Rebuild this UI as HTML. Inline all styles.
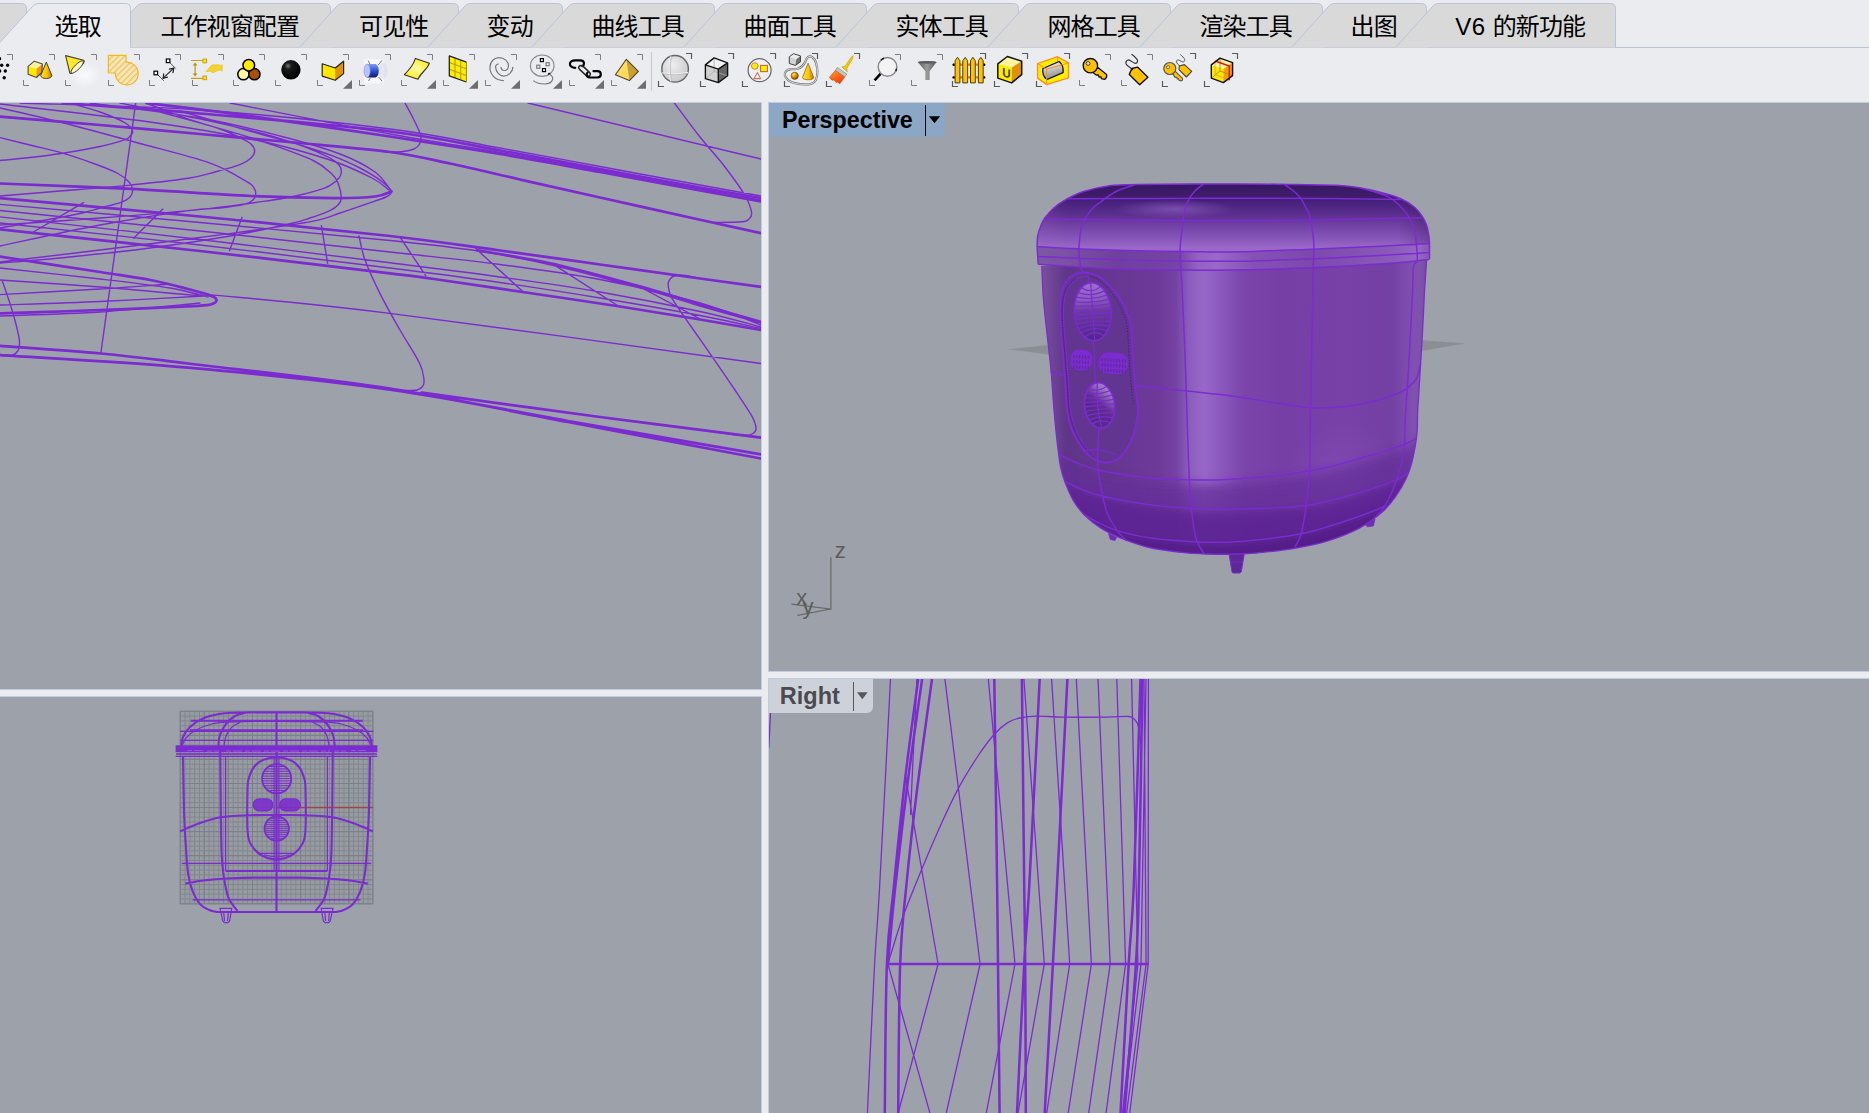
<!DOCTYPE html>
<html lang="zh-CN"><head><meta charset="utf-8"><title>Rhino</title>
<style>
html,body{margin:0;padding:0;}
body{width:1869px;height:1113px;overflow:hidden;background:#ebecf0;position:relative;font-family:"Liberation Sans","Noto Sans CJK SC",sans-serif;}
.abs{position:absolute;}
.vp{position:absolute;background:#9da2aa;overflow:hidden;box-shadow:0 0 0 1px #c3cbe0;}
.tabtxt{position:absolute;top:9.8px;height:34px;line-height:34px;font-size:24px;letter-spacing:-0.9px;text-indent:-1.6px;color:#000;text-align:center;white-space:nowrap;}
.vtitle{position:absolute;font-family:"Liberation Sans",sans-serif;font-weight:bold;color:#000;white-space:nowrap;}
svg{position:absolute;left:0;top:0;overflow:visible;}
</style></head><body>

<svg width="1869" height="50" viewBox="0 0 1869 50">
<path d="M0 47.5H1869" stroke="#b9c3da" stroke-width="1" fill="none"/>
<path d="M-131.0 47.5 L-94.5 7.0 Q-92.0 3.5 -88.5 3.5 L21.5 3.5 Q26.5 3.5 26.5 8.5 L26.5 47.5 Z" fill="#d9d9d9" stroke="none"/>
<path d="M-131.0 47.5 L-94.5 7.0 Q-92.0 3.5 -88.5 3.5 L21.5 3.5 Q26.5 3.5 26.5 8.5 L26.5 47.5" fill="none" stroke="#b9c3da" stroke-width="1"/>
<path d="M99.5 47.5 L136.0 7.0 Q138.5 3.5 142.0 3.5 L325.5 3.5 Q330.5 3.5 330.5 8.5 L330.5 47.5 Z" fill="#d9d9d9" stroke="none"/>
<path d="M99.5 47.5 L136.0 7.0 Q138.5 3.5 142.0 3.5 L325.5 3.5 Q330.5 3.5 330.5 8.5 L330.5 47.5" fill="none" stroke="#b9c3da" stroke-width="1"/>
<path d="M299.5 47.5 L336.0 7.0 Q338.5 3.5 342.0 3.5 L453.5 3.5 Q458.5 3.5 458.5 8.5 L458.5 47.5 Z" fill="#d9d9d9" stroke="none"/>
<path d="M299.5 47.5 L336.0 7.0 Q338.5 3.5 342.0 3.5 L453.5 3.5 Q458.5 3.5 458.5 8.5 L458.5 47.5" fill="none" stroke="#b9c3da" stroke-width="1"/>
<path d="M427.5 47.5 L464.0 7.0 Q466.5 3.5 470.0 3.5 L557.5 3.5 Q562.5 3.5 562.5 8.5 L562.5 47.5 Z" fill="#d9d9d9" stroke="none"/>
<path d="M427.5 47.5 L464.0 7.0 Q466.5 3.5 470.0 3.5 L557.5 3.5 Q562.5 3.5 562.5 8.5 L562.5 47.5" fill="none" stroke="#b9c3da" stroke-width="1"/>
<path d="M531.5 47.5 L568.0 7.0 Q570.5 3.5 574.0 3.5 L709.5 3.5 Q714.5 3.5 714.5 8.5 L714.5 47.5 Z" fill="#d9d9d9" stroke="none"/>
<path d="M531.5 47.5 L568.0 7.0 Q570.5 3.5 574.0 3.5 L709.5 3.5 Q714.5 3.5 714.5 8.5 L714.5 47.5" fill="none" stroke="#b9c3da" stroke-width="1"/>
<path d="M683.5 47.5 L720.0 7.0 Q722.5 3.5 726.0 3.5 L861.5 3.5 Q866.5 3.5 866.5 8.5 L866.5 47.5 Z" fill="#d9d9d9" stroke="none"/>
<path d="M683.5 47.5 L720.0 7.0 Q722.5 3.5 726.0 3.5 L861.5 3.5 Q866.5 3.5 866.5 8.5 L866.5 47.5" fill="none" stroke="#b9c3da" stroke-width="1"/>
<path d="M835.5 47.5 L872.0 7.0 Q874.5 3.5 878.0 3.5 L1013.5 3.5 Q1018.5 3.5 1018.5 8.5 L1018.5 47.5 Z" fill="#d9d9d9" stroke="none"/>
<path d="M835.5 47.5 L872.0 7.0 Q874.5 3.5 878.0 3.5 L1013.5 3.5 Q1018.5 3.5 1018.5 8.5 L1018.5 47.5" fill="none" stroke="#b9c3da" stroke-width="1"/>
<path d="M987.5 47.5 L1024.0 7.0 Q1026.5 3.5 1030.0 3.5 L1165.5 3.5 Q1170.5 3.5 1170.5 8.5 L1170.5 47.5 Z" fill="#d9d9d9" stroke="none"/>
<path d="M987.5 47.5 L1024.0 7.0 Q1026.5 3.5 1030.0 3.5 L1165.5 3.5 Q1170.5 3.5 1170.5 8.5 L1170.5 47.5" fill="none" stroke="#b9c3da" stroke-width="1"/>
<path d="M1139.5 47.5 L1176.0 7.0 Q1178.5 3.5 1182.0 3.5 L1317.5 3.5 Q1322.5 3.5 1322.5 8.5 L1322.5 47.5 Z" fill="#d9d9d9" stroke="none"/>
<path d="M1139.5 47.5 L1176.0 7.0 Q1178.5 3.5 1182.0 3.5 L1317.5 3.5 Q1322.5 3.5 1322.5 8.5 L1322.5 47.5" fill="none" stroke="#b9c3da" stroke-width="1"/>
<path d="M1291.5 47.5 L1328.0 7.0 Q1330.5 3.5 1334.0 3.5 L1421.5 3.5 Q1426.5 3.5 1426.5 8.5 L1426.5 47.5 Z" fill="#d9d9d9" stroke="none"/>
<path d="M1291.5 47.5 L1328.0 7.0 Q1330.5 3.5 1334.0 3.5 L1421.5 3.5 Q1426.5 3.5 1426.5 8.5 L1426.5 47.5" fill="none" stroke="#b9c3da" stroke-width="1"/>
<path d="M1395.5 47.5 L1432.0 7.0 Q1434.5 3.5 1438.0 3.5 L1610.5 3.5 Q1615.5 3.5 1615.5 8.5 L1615.5 47.5 Z" fill="#d9d9d9" stroke="none"/>
<path d="M1395.5 47.5 L1432.0 7.0 Q1434.5 3.5 1438.0 3.5 L1610.5 3.5 Q1615.5 3.5 1615.5 8.5 L1615.5 47.5" fill="none" stroke="#b9c3da" stroke-width="1"/>
<path d="M-4.5 47.5 L32.0 7.0 Q34.5 3.5 38.0 3.5 L125.5 3.5 Q130.5 3.5 130.5 8.5 L130.5 47.5 L130.5 49 L-5.5 49 Z" fill="#ebecf0" stroke="none"/>
<path d="M-4.5 47.5 L32.0 7.0 Q34.5 3.5 38.0 3.5 L125.5 3.5 Q130.5 3.5 130.5 8.5 L130.5 47.5" fill="none" stroke="#b9c3da" stroke-width="1"/>
</svg>
<div class="tabtxt" style="left:26.5px;width:104.0px">选取</div>
<div class="tabtxt" style="left:130.5px;width:200.0px">工作视窗配置</div>
<div class="tabtxt" style="left:330.5px;width:128.0px">可见性</div>
<div class="tabtxt" style="left:458.5px;width:104.0px">变动</div>
<div class="tabtxt" style="left:562.5px;width:152.0px">曲线工具</div>
<div class="tabtxt" style="left:714.5px;width:152.0px">曲面工具</div>
<div class="tabtxt" style="left:866.5px;width:152.0px">实体工具</div>
<div class="tabtxt" style="left:1018.5px;width:152.0px">网格工具</div>
<div class="tabtxt" style="left:1170.5px;width:152.0px">渲染工具</div>
<div class="tabtxt" style="left:1322.5px;width:104.0px">出图</div>
<div class="tabtxt" style="left:1426.5px;width:189.0px"><span style="letter-spacing:0.5px">V6 </span>的新功能</div>
<svg width="1869" height="56" viewBox="0 48 1869 56" style="left:0;top:48px">
<defs>
<linearGradient id="iy" x1="0" y1="0" x2="1" y2="1"><stop offset="0" stop-color="#fff27a"/><stop offset="1" stop-color="#f6c800"/></linearGradient>
<linearGradient id="icone" x1="0" y1="0" x2="1" y2="0"><stop offset="0" stop-color="#ffe23c"/><stop offset="0.55" stop-color="#ffc400"/><stop offset="1" stop-color="#b87400"/></linearGradient>
<radialGradient id="iblk" cx="0.35" cy="0.3" r="0.7"><stop offset="0" stop-color="#7a7a7a"/><stop offset="0.25" stop-color="#1a1a1a"/><stop offset="1" stop-color="#000"/></radialGradient>
<linearGradient id="iblue" x1="0" y1="0" x2="0" y2="1"><stop offset="0" stop-color="#7c98ff"/><stop offset="0.5" stop-color="#3450cc"/><stop offset="1" stop-color="#0c1478"/></linearGradient>
<radialGradient id="isurf" cx="0.5" cy="0.5" r="0.6"><stop offset="0" stop-color="#fffbb0"/><stop offset="1" stop-color="#ffe800"/></radialGradient>
<radialGradient id="isph" cx="0.4" cy="0.35" r="0.75"><stop offset="0" stop-color="#eeeeef"/><stop offset="1" stop-color="#c6c6ca"/></radialGradient>
<linearGradient id="ibr" x1="0" y1="0" x2="0.4" y2="1"><stop offset="0" stop-color="#ffa020"/><stop offset="1" stop-color="#ff3a10"/></linearGradient>
<linearGradient id="ifun" x1="0" y1="0" x2="1" y2="0"><stop offset="0" stop-color="#5a5a5a"/><stop offset="0.5" stop-color="#9a9a9a"/><stop offset="1" stop-color="#555"/></linearGradient>
<linearGradient id="icyl" x1="0" y1="0" x2="0.3" y2="1"><stop offset="0" stop-color="#ffffff"/><stop offset="1" stop-color="#8e8e8e"/></linearGradient>
<radialGradient id="iorb" cx="0.35" cy="0.3" r="0.8"><stop offset="0" stop-color="#ffe873"/><stop offset="0.45" stop-color="#e09000"/><stop offset="1" stop-color="#7a3c00"/></radialGradient>
<pattern id="ihat" width="4.2" height="4.2" patternUnits="userSpaceOnUse" patternTransform="rotate(-45)"><rect width="4.2" height="4.2" fill="#f5e6c2"/><rect width="4.2" height="1.25" fill="#f3c446"/></pattern>
<radialGradient id="iglow" cx="0.5" cy="0.5" r="0.5"><stop offset="0" stop-color="#fff" stop-opacity="0.75"/><stop offset="1" stop-color="#fff" stop-opacity="0"/></radialGradient>
</defs>
<g fill="#000"><circle cx="-0.5" cy="58.7" r="1.7"/><circle cx="1.7" cy="65.2" r="1.7"/><circle cx="7.6" cy="65.2" r="1.7"/><circle cx="-0.4" cy="71.0" r="1.7"/><circle cx="5.3" cy="71.0" r="1.7"/><circle cx="4.2" cy="77.8" r="1.7"/></g>
<path d="M7 54.5H12.5V60" stroke="#7e7e7e" fill="none"/>
<path d="M49 54.5H54.5V60 M23.5 80V85.5H29" stroke="#7e7e7e" stroke-width="1" fill="none"/><g transform="translate(23 54)"><path d="M5.1 12.3L11.3 7.2L19.4 10L13.5 14.8Z" fill="#fff5a0"/><path d="M5.1 12.3L13.5 14.8V23.5L5.1 20.2Z" fill="#ffe800"/><path d="M13.5 14.8L19.4 10L18.8 18.5L13.5 23.5Z" fill="#f09a10"/><path d="M5.1 12.3L11.3 7.2L19.4 10L18.8 18.5L13.5 23.5L5.1 20.2Z" fill="none" stroke="#4a4a40" stroke-width="1.1" stroke-linejoin="round"/><path d="M23.3 8.1L28.9 21.6A5.6 2.9 0 0 1 17.7 21.6Z" fill="url(#icone)" stroke="#4a4030" stroke-width="1" stroke-linejoin="round"/></g>
<path d="M91 54.5H96.5V60 M65.5 80V85.5H71" stroke="#7e7e7e" stroke-width="1" fill="none"/><ellipse cx="85" cy="75" rx="16" ry="13" fill="url(#iglow)"/><g transform="translate(65 54)"><path d="M0.6 1.6L18.6 6.2Q20 7 18.2 9.6L7 19.2Q4.6 20.2 4.6 18Z" fill="#ffe92a" stroke="#46462e" stroke-width="1.1" stroke-linejoin="round"/><ellipse cx="12.2" cy="13" rx="8.4" ry="2.6" transform="rotate(-45 12.2 13)" fill="#fff3cc" stroke="#3c3c2c" stroke-width="0.9"/></g>
<path d="M134 54.5H139.5V60 M108.5 80V85.5H114" stroke="#7e7e7e" stroke-width="1" fill="none"/><g transform="translate(108 54)"><path d="M0.4 1.4H18V8.2A11.4 11.4 0 1 1 7.4 19H0.4Z" fill="url(#ihat)" stroke="#f2b824" stroke-width="1.2"/></g>
<path d="M175 54.5H180.5V60 M149.5 80V85.5H155" stroke="#7e7e7e" stroke-width="1" fill="none"/><g transform="translate(149 54)"><path d="M20.8 8.6L26.8 14.6M8.6 20.6L14.8 26.8" stroke="#555" stroke-width="1"/><path d="M14.2 24.1L24.6 14.3" stroke="#333" stroke-width="1.2"/><path d="M24.9 14L20.4 15.2M24.9 14L24 18.6M14 24.4L18.4 23.2M14 24.4L14.8 19.9" stroke="#222" stroke-width="1.2" stroke-linecap="round"/><rect x="17.3" y="5" width="3.6" height="3.6" fill="#fff" stroke="#000" stroke-width="1.2"/><rect x="5" y="17.2" width="3.6" height="3.6" fill="#fff" stroke="#000" stroke-width="1.2"/></g>
<path d="M218 54.5H223.5V60 M192.5 80V85.5H198" stroke="#7e7e7e" stroke-width="1" fill="none"/><g transform="translate(192 54)"><path d="M-1 6.5H11M-1 24.4H11" stroke="#c6a21c" stroke-width="1.1"/><path d="M3.1 9.5V21.5" stroke="#b8961a" stroke-width="1.2"/><path d="M3.1 8.4L5.6 11.4H0.6ZM3.1 22.6L5.6 19.6H0.6Z" fill="#b8961a"/><rect x="10.9" y="5.1" width="3.7" height="3.7" fill="#ffe600" stroke="#c8a21c" stroke-width="1"/><rect x="10.9" y="22" width="3.7" height="3.7" fill="#ffe600" stroke="#c8a21c" stroke-width="1"/><path d="M14.1 17.6L20 10.9H26.7L28.7 11.7L30.1 10.7V17.1L28.1 15.7L23.3 17.6L21.1 18.8L18.3 17.1Z" fill="#f6d22c" stroke="#e8c020" stroke-width="0.8" stroke-linejoin="round"/></g>
<path d="M259 54.5H264.5V60 M233.5 80V85.5H239" stroke="#7e7e7e" stroke-width="1" fill="none"/><g transform="translate(233 54)"><circle cx="10.4" cy="20.2" r="5.6" fill="#fff6a0" stroke="#000" stroke-width="1.5"/><circle cx="21.4" cy="20.2" r="5.6" fill="#a65200" stroke="#000" stroke-width="1.5"/><circle cx="15.8" cy="11.2" r="5.8" fill="#ffec00" stroke="#000" stroke-width="1.5"/></g>
<path d="M301 54.5H306.5V60 M275.5 80V85.5H281" stroke="#7e7e7e" stroke-width="1" fill="none"/><g transform="translate(275 54)"><circle cx="15.9" cy="15.8" r="9.7" fill="url(#iblk)"/></g>
<path d="M343 54.5H348.5V60 M317.5 80V85.5H323" stroke="#7e7e7e" stroke-width="1" fill="none"/><path d="M352.0 80.0V88.8H343.0Z" fill="#6e6e6e"/><g transform="translate(317 54)"><path d="M5.2 9.8L18.2 14V26.3L5.2 22.1Z" fill="#ffe800"/><path d="M18.2 14L26.6 7.2V19.6L18.2 26.3Z" fill="#e39500"/><path d="M5.2 9.8L18.2 14L26.6 7.2V19.6L18.2 26.3L5.2 22.1Z" fill="none" stroke="#222" stroke-width="1.2" stroke-linejoin="round"/></g>
<path d="M385 54.5H390.5V60 M359.5 80V85.5H365" stroke="#7e7e7e" stroke-width="1" fill="none"/><g transform="translate(359 54)"><rect x="5" y="5.3" width="19.8" height="24.4" fill="#fff" fill-opacity="0.55"/><ellipse cx="24" cy="16.5" rx="4.5" ry="8" fill="#d8dcf0" fill-opacity="0.6"/><path d="M9.2 6.7L11 10.2M23 6.4L19 11.2M19.6 23L23 27M9.6 27L11.2 24" stroke="#666" stroke-width="0.9"/><path d="M8.1 10.1H16.5Q19.8 11.5 19.8 16.8Q19.8 22 16.5 23.5H8.1Z" fill="url(#iblue)"/><ellipse cx="8.1" cy="16.8" rx="3.1" ry="6.7" fill="#b6c2ff" stroke="#8890c0" stroke-width="0.6"/></g>
<path d="M427 54.5H432.5V60 M401.5 80V85.5H407" stroke="#7e7e7e" stroke-width="1" fill="none"/><path d="M436.0 80.0V88.8H427.0Z" fill="#6e6e6e"/><g transform="translate(401 54)"><path d="M14.4 4.4L28.4 9.2Q27 13 23 17T16.9 25.2L3.4 20.7Q7 17 10 13T14.4 4.4Z" fill="url(#isurf)" stroke="#333" stroke-width="1.1" stroke-linejoin="round"/></g>
<path d="M469 54.5H474.5V60 M443.5 80V85.5H449" stroke="#7e7e7e" stroke-width="1" fill="none"/><path d="M478.0 80.0V88.8H469.0Z" fill="#6e6e6e"/><g transform="translate(443 54)"><path d="M6.3 1.9L23.4 8.1V28L6.3 21.8Z" fill="#ffee00"/><path d="M12 4V23.9M17.7 6V25.9M6.3 8.5L23.4 14.7M6.3 15.2L23.4 21.4" stroke="#b4a200" stroke-width="1.1"/><path d="M23.4 8.1L6.3 1.9V21.8L23.4 28" fill="none" stroke="#222" stroke-width="1.3" stroke-linejoin="round"/><path d="M23.4 8.1V28" stroke="#9a8c00" stroke-width="1"/></g>
<path d="M511 54.5H516.5V60 M485.5 80V85.5H491" stroke="#7e7e7e" stroke-width="1" fill="none"/><path d="M520.0 80.0V88.8H511.0Z" fill="#6e6e6e"/><g transform="translate(485 54)"><path d="M18.8 26.6C10 26.5 4.6 20 5 12.9C5.4 7 9.5 3.6 14 3.6C19.5 3.6 23.6 7.6 23.5 11.7C23.4 15 21.5 16.6 19.6 16.5C17.5 16.4 16 14.8 16 12.9" fill="none" stroke="#777" stroke-width="1.2"/><path d="M13.6 10C11.5 10 10.4 11.6 10.6 13.4C11 18 14.5 22.1 18.5 22.1C23.5 22 27.6 18 28 12.9" fill="none" stroke="#777" stroke-width="1.2"/></g>
<path d="M553 54.5H558.5V60" stroke="#7e7e7e" fill="none" opacity="0"/><path d="M562.0 80.0V88.8H553.0Z" fill="#6e6e6e"/><g transform="translate(527 54)"><ellipse cx="15.2" cy="11.7" rx="11.8" ry="10.7" fill="none" stroke="#8a8a8a" stroke-width="1.2"/><rect x="13.4" y="4.6" width="3" height="3" fill="#fff" stroke="#000" stroke-width="1.2"/><rect x="19.1" y="8.7" width="3" height="3" fill="#fff" stroke="#777" stroke-width="1.2"/><rect x="9.8" y="11.2" width="3" height="3" fill="#fff" stroke="#777" stroke-width="1.2"/><rect x="15.5" y="14.6" width="3" height="3" fill="#fff" stroke="#000" stroke-width="1.2"/><circle cx="22.2" cy="19.9" r="1.1" fill="#000"/><path d="M22.2 19.9C25 21.5 26.2 23.5 25.6 25.5C24.5 29 20.5 30 17.5 30C13 30 9 28.6 6.2 26.6" fill="none" stroke="#777" stroke-width="1.1"/></g>
<path d="M595 54.5H600.5V60" stroke="#7e7e7e" fill="none"/><path d="M569.5 80V85.5H575" stroke="#7e7e7e" fill="none"/><path d="M604.0 80.0V88.8H595.0Z" fill="#6e6e6e"/><g transform="translate(569 54)"><path d="M6.3 13.8C3 13.8 0.9 12 0.9 10C0.9 8 3 6.4 6 6.4H11C13.6 6.4 15 8 15 9.6C15 10.6 14.4 11.6 13.4 12.2" fill="none" stroke="#000" stroke-width="2.2" stroke-linecap="round"/><path d="M10 12.4C11.2 11 13 11.2 14.2 12.4L20.6 18.4C21.8 19.8 21.4 21.2 20.4 21.8C19.2 22.6 17.8 22.2 16.8 21.2L10.6 15.4C9.6 14.4 9.4 13.2 10 12.4Z" fill="none" stroke="#222" stroke-width="1.5"/><path d="M24.4 17.1H28.6C30.8 17.1 31.8 18.8 31.8 20.3C31.8 22 30.6 23.5 28.4 23.5H21C18.8 23.5 17.6 22 17.6 20.6C17.6 19.8 18 19 18.6 18.6" fill="none" stroke="#000" stroke-width="2.2" stroke-linecap="round"/></g>
<path d="M637 54.5H642.5V60 M611.5 80V85.5H617" stroke="#7e7e7e" stroke-width="1" fill="none"/><path d="M646.0 80.0V88.8H637.0Z" fill="#6e6e6e"/><g transform="translate(611 54)"><path d="M15.3 5.3L4.4 20.7L18.4 26.6Z" fill="#ffda5c"/><path d="M15.3 5.3L18.4 26.6L27.4 17.3Z" fill="#c8a030"/><path d="M15.3 5.3L4.4 20.7L18.4 26.6L27.4 17.3Z" fill="none" stroke="#4a4432" stroke-width="1.1" stroke-linejoin="round"/></g>
<path d="M651.5 52V90.5" stroke="#c9cacf" stroke-width="1.2"/>
<path d="M686 53.5H691.5V59 M658.5 81V86.5H664" stroke="#5a5a5a" stroke-width="1.2" fill="none"/><g transform="translate(658 53)"><circle cx="17.1" cy="15.8" r="13.3" fill="url(#isph)" stroke="#666" stroke-width="1.4"/><path d="M12.6 3.4Q9.6 15.8 12.8 28.4M4 19.8Q17 22.6 30.2 19.4" fill="none" stroke="#f2f2f4" stroke-width="1"/><path d="M13.6 3.2Q10.6 15.8 13.8 28.6M4 20.8Q17 23.6 30.2 20.4" fill="none" stroke="#b9b9be" stroke-width="0.8"/></g>
<path d="M728 53.5H733.5V59 M700.5 81V86.5H706" stroke="#5a5a5a" stroke-width="1.2" fill="none"/><g transform="translate(700 53)"><path d="M5.4 11.9L14.1 4.9L27.6 9.9L18.3 16.1Z" fill="#f2f2f2"/><path d="M5.4 11.9L18.3 16.1V29.6L5.4 25.7Z" fill="#cfcfcf" fill-opacity="0.92"/><path d="M18.3 16.1L27.6 9.9V22.8L18.3 29.6Z" fill="#666"/><path d="M14.1 4.9V18.3L5.4 25.7M14.1 18.3L27.6 22.8" fill="none" stroke="#aaa" stroke-width="0.8"/><path d="M5.4 11.9L14.1 4.9L27.6 9.9V22.8L18.3 29.6L5.4 25.7ZM5.4 11.9L18.3 16.1L27.6 9.9M18.3 16.1V29.6" fill="none" stroke="#111" stroke-width="1.4" stroke-linejoin="round"/></g>
<path d="M770 53.5H775.5V59 M742.5 81V86.5H748" stroke="#5a5a5a" stroke-width="1.2" fill="none"/><g transform="translate(742 53)"><circle cx="17.6" cy="17.2" r="11.5" fill="#f0f0f4" stroke="#666" stroke-width="1.2"/><circle cx="12.8" cy="13" r="3.3" fill="#ffee00" stroke="#d4883a" stroke-width="1"/><rect x="18.6" y="12.4" width="6.8" height="6.2" fill="#ffee00" stroke="#c0701e" stroke-width="1.1"/><path d="M15.4 19.7L11.9 25.6H18.6Z" fill="none" stroke="#c47a56" stroke-width="1.1"/></g>
<path d="M812 53.5H817.5V59 M784.5 81V86.5H790" stroke="#5a5a5a" stroke-width="1.2" fill="none"/><g transform="translate(784 53)"><path d="M1.6 18.9C3 16.6 5 16.2 7.2 16.1C10 16 12 16.4 14.5 15.5C17.5 14.4 19.5 12 20.7 9.9C22 7.6 22.5 4.8 24.1 4C25.3 3.3 26.8 3.3 28 4C30.5 5.5 31.4 7.6 32 9.9C32.8 12.8 33.4 15 33.4 18.3C33.4 21.5 33 24.5 32 26.8C30.5 30 27.5 31.3 24.1 31.3C20 31.4 16.5 31.4 12.9 30.7C9.5 30 6.5 29 4.4 27.3C2.5 25.8 1.2 24 0.8 22.3C0.5 21 0.9 20 1.6 18.9Z" fill="#f2f2f5" fill-opacity="0.6" stroke="#777" stroke-width="2.2"/><path d="M1.6 18.9C3 16.6 5 16.2 7.2 16.1C10 16 12 16.4 14.5 15.5C17.5 14.4 19.5 12 20.7 9.9C22 7.6 22.5 4.8 24.1 4C25.3 3.3 26.8 3.3 28 4C30.5 5.5 31.4 7.6 32 9.9C32.8 12.8 33.4 15 33.4 18.3C33.4 21.5 33 24.5 32 26.8C30.5 30 27.5 31.3 24.1 31.3C20 31.4 16.5 31.4 12.9 30.7C9.5 30 6.5 29 4.4 27.3C2.5 25.8 1.2 24 0.8 22.3C0.5 21 0.9 20 1.6 18.9Z" fill="none" stroke="#f4f4f4" stroke-width="0.8"/><path d="M5.3 3.7L9.5 0.7L16.5 2.9L12.3 6.3Z" fill="#ececec"/><path d="M5.3 3.7L12.3 6.3L11.4 12.4L5.3 10.5Z" fill="#d2d2d2"/><path d="M12.3 6.3L16.5 2.9V8.8L11.4 12.4Z" fill="#707070"/><path d="M5.3 3.7L9.5 0.7L16.5 2.9V8.8L11.4 12.4L5.3 10.5Z" fill="none" stroke="#444" stroke-width="1"/><circle cx="10.7" cy="22.8" r="3.6" fill="url(#iorb)" stroke="#6a3a00" stroke-width="0.6"/><path d="M24.1 10.2L29.7 24.5A5.6 2.3 0 0 1 18.5 24.5Z" fill="url(#icone)" stroke="#8a5a10" stroke-width="0.7" stroke-linejoin="round"/></g>
<path d="M854 53.5H859.5V59 M826.5 81V86.5H832" stroke="#5a5a5a" stroke-width="1.2" fill="none"/><g transform="translate(826 53)"><path d="M27.3 2.6L26.4 6L20.8 15.5L21.4 18.9L15.8 13.9L19 13.2L25.2 4.2Z" fill="#f2c800" stroke="#c8a000" stroke-width="0.6" stroke-linejoin="round"/><path d="M11.3 14.4L20.9 21.2L18.6 24L9.3 17.5Z" fill="#c4c4c4" stroke="#8a8a8a" stroke-width="0.7"/><path d="M9.3 17.5L18.6 24L13.6 31L11.8 29L10 29.4L8.2 27L6 27.2L3.4 24.5Z" fill="url(#ibr)" stroke="#c05018" stroke-width="0.6"/></g>
<path d="M895 54.5H900.5V60 M869.5 80V85.5H875" stroke="#7e7e7e" stroke-width="1" fill="none"/><g transform="translate(869 54)"><path d="M11.7 19.6L5.6 26.3" stroke="#000" stroke-width="2.6"/><circle cx="18.5" cy="12.9" r="9.3" fill="#f3f3f4" stroke="#8a8a8a" stroke-width="1.5"/><path d="M12 6.2A9.3 9.3 0 0 1 15 4.3M27.6 14.6A9.3 9.3 0 0 1 26.7 17.2" fill="none" stroke="#222" stroke-width="1.5"/></g>
<path d="M937 54.5H942.5V60 M911.5 80V85.5H917" stroke="#7e7e7e" stroke-width="1" fill="none"/><g transform="translate(911 54)"><path d="M6.8 8.1Q16.2 6.4 25.6 8.1L18.6 17.3V26.1H14.4V17.3Z" fill="url(#ifun)"/><ellipse cx="16.2" cy="8.3" rx="9.4" ry="1.4" fill="#5c5c5c"/></g>
<path d="M980 53.5H985.5V59 M952.5 81V86.5H958" stroke="#5a5a5a" stroke-width="1.2" fill="none"/><g transform="translate(952 53)"><path d="M1.4 11.7H32.3M1.4 24.4H32.3" stroke="#e08400" stroke-width="2.2"/><circle cx="1.6" cy="11.7" r="1.2"/><circle cx="32.2" cy="11.7" r="1.2"/><circle cx="1.6" cy="24.4" r="1.2"/><circle cx="32.2" cy="24.4" r="1.2"/><path d="M3.1 29.9V7.7L5.5 4.3L7.9 7.7V29.9Z" fill="#ffc200" stroke="#3a3000" stroke-width="0.9" stroke-linejoin="round"/><path d="M10.8 29.9V7.7L13.2 4.3L15.6 7.7V29.9Z" fill="#ffc200" stroke="#3a3000" stroke-width="0.9" stroke-linejoin="round"/><path d="M18.5 29.9V7.7L20.9 4.3L23.3 7.7V29.9Z" fill="#ffc200" stroke="#3a3000" stroke-width="0.9" stroke-linejoin="round"/><path d="M26.4 29.9V7.7L28.8 4.3L31.2 7.7V29.9Z" fill="#ffc200" stroke="#3a3000" stroke-width="0.9" stroke-linejoin="round"/></g>
<path d="M1022 53.5H1027.5V59 M994.5 81V86.5H1000" stroke="#5a5a5a" stroke-width="1.2" fill="none"/><g transform="translate(994 53)"><path d="M3.8 10.8L13.4 3.5L27.7 8.2L17.9 14.4Z" fill="#fff6a0"/><path d="M3.8 10.8L17.9 14.4L17.6 29.9L3.8 25.1Z" fill="#ffec00"/><path d="M17.9 14.4L27.7 8.2V21.7L17.6 29.9Z" fill="#e19200"/><path d="M3.8 10.8L13.4 3.5L27.7 8.2V21.7L17.6 29.9L3.8 25.1Z" fill="none" stroke="#111" stroke-width="1.5" stroke-linejoin="round"/><text x="8.3" y="21" font-family="Liberation Sans,sans-serif" font-weight="bold" font-size="12.5" fill="#4c4400" transform="skewY(15)" textLength="8.4" lengthAdjust="spacingAndGlyphs">U</text></g>
<path d="M1064 53.5H1069.5V59 M1036.5 81V86.5H1042" stroke="#5a5a5a" stroke-width="1.2" fill="none"/><g transform="translate(1036 53)"><path d="M1.6 10.5L21.5 3.7L32.5 9.9V24.8L10.9 31.6L1.6 25.1Z" fill="#ffee00" stroke="#ff8a26" stroke-width="1.3" stroke-linejoin="round"/><path d="M6.9 15.5L23.2 8.5Q27.8 12.5 27.1 19.5L10.9 26.5Q6 23 6.9 15.5Z" fill="url(#icyl)" stroke="#111" stroke-width="1.3"/><path d="M1.6 10.5L10.6 16.1V31.4M10.6 16.1L32.3 10M21.5 3.7V8" fill="none" stroke="#ff8a26" stroke-width="1"/></g>
<path d="M1105 54.5H1110.5V60 M1079.5 80V85.5H1085" stroke="#7e7e7e" stroke-width="1" fill="none"/><g transform="translate(1079 54)"><path d="M13.6 18.2L18.6 13.2L27.6 20.6Q28.4 23.6 25.6 25.4L22.4 24.6L22 22.8L20 23L19.4 21L17.2 21Z" fill="#ffc200" stroke="#111" stroke-width="1.3" stroke-linejoin="round"/><circle cx="11.4" cy="11.7" r="7.2" fill="#ffc200" stroke="#111" stroke-width="1.4"/><circle cx="9.1" cy="9.5" r="1.9" fill="#dcdce8" stroke="#333" stroke-width="0.9"/></g>
<path d="M1147 54.5H1152.5V60 M1121.5 80V85.5H1127" stroke="#7e7e7e" stroke-width="1" fill="none"/><g transform="translate(1121 54)"><path d="M10.6 0.2C13 2 16 4.4 16.5 6.4C17 8.4 15.4 9.6 13.7 9.2C11.4 8.6 9.4 5.6 7 6C5 6.4 4.6 8.4 5.2 10C6.2 12 8.4 13 10.3 14.5" fill="none" stroke="#333" stroke-width="1.2"/><path d="M10.9 14.5L16.5 13.1L26.9 23.2L18.7 30.8L8.3 20.4Z" fill="#ffc200" stroke="#111" stroke-width="1.4" stroke-linejoin="round"/><circle cx="11.2" cy="15.3" r="1" fill="#111"/></g>
<path d="M1190 53.5H1195.5V59 M1162.5 81V86.5H1168" stroke="#5a5a5a" stroke-width="1.2" fill="none"/><g transform="translate(1162 53)"><path d="M18.2 1.5C20 3 22.4 5 22.7 6.6C23 8.2 21.8 9.2 20.4 8.8C18.6 8.3 17.2 6.6 15.4 7.1C14.2 7.5 14.2 8.8 14.8 9.8C15.6 11 16.8 12 17.6 13" fill="none" stroke="#555" stroke-width="1"/><path d="M17.3 13L22.4 11.6L29.7 18.3L24.3 24L17 16.7Z" fill="#ffc200" stroke="#444" stroke-width="1.1" stroke-linejoin="round"/><path d="M10.6 20.6L13 18.2L20.6 25.4Q21 27.2 19.4 27.9L17 27.2L16.6 25.8L15.2 25.9L14.8 24.4L13.2 24.4Z" fill="#ffc200" stroke="#555" stroke-width="1.1" stroke-linejoin="round"/><circle cx="7.8" cy="15.5" r="6" fill="#ffc200" stroke="#555" stroke-width="1.2"/><circle cx="6.1" cy="14.2" r="1.6" fill="#dcdce8" stroke="#555" stroke-width="0.8"/></g>
<path d="M1232 53.5H1237.5V59 M1204.5 81V86.5H1210" stroke="#5a5a5a" stroke-width="1.2" fill="none"/><g transform="translate(1204 53)"><path d="M7.3 11.9L16 5.1L28.6 9.6L19.6 16Z" fill="#fff4a0"/><path d="M7.3 11.9L19.6 16L19.4 29.6L7.3 25.1Z" fill="#ffe800"/><path d="M19.6 16L28.6 9.6V22.6L19.4 29.6Z" fill="#f0a000"/><path d="M16 5.1V18L7.3 25.1M16 18L28.6 22.6" fill="none" stroke="#b08000" stroke-width="0.8"/><path d="M11.2 8L25.3 13V27.3" fill="none" stroke="#e01414" stroke-width="1.5"/><path d="M11.2 8V21.5L25.3 27" fill="none" stroke="#f07a50" stroke-width="0.8" opacity="0.7"/><path d="M7.3 11.9L16 5.1L28.6 9.6V22.6L19.4 29.6L7.3 25.1Z" fill="none" stroke="#111" stroke-width="1.4" stroke-linejoin="round"/></g>
</svg>
<div class="vp" id="vpTL" style="left:0;top:103px;width:761px;height:586px"><svg width="1869" height="1113" viewBox="0 0 1869 1113" style="left:0;top:-103px" fill="none" stroke="#7b2bcf" stroke-linecap="round">
<path stroke-width="1.4" d="M135.7 103.0L100.8 353.5M20.0 103.0C50.0 104.2 138.3 105.7 200.0 110.0C261.7 114.3 340.0 122.7 390.0 129.0C440.0 135.3 465.0 141.8 500.0 148.0C535.0 154.2 566.7 160.3 600.0 166.5C633.3 172.7 673.2 180.1 700.0 185.0C726.8 189.9 750.8 194.2 761.0 196.0M230.0 103.0C256.7 108.2 345.0 125.8 390.0 134.0C435.0 142.2 465.0 146.4 500.0 152.5C535.0 158.6 566.7 164.4 600.0 170.5C633.3 176.6 673.2 184.1 700.0 189.0C726.8 193.9 750.8 198.2 761.0 200.0M528.0 103.0L761.0 159.0M674.4 103.0C678.7 108.7 691.6 126.3 700.0 137.0C708.4 147.7 717.5 157.2 725.0 167.0C732.5 176.8 740.9 188.4 745.3 196.0C749.7 203.6 751.0 208.9 751.6 212.7C752.2 216.5 750.6 217.5 749.0 219.0C747.4 220.5 747.8 221.2 742.0 221.8C736.2 222.4 718.7 222.4 714.0 222.5M405.0 103.0C406.5 105.8 411.4 114.6 414.0 120.0C416.6 125.4 419.8 131.5 420.7 135.5C421.6 139.5 420.6 141.8 419.5 144.0C418.4 146.2 417.1 147.7 414.0 149.0C410.9 150.3 405.7 151.4 400.9 151.8C396.1 152.2 387.6 151.6 385.0 151.5M68.9 103.0C74.1 104.5 90.6 108.7 100.0 112.0C109.4 115.3 119.9 119.8 125.3 123.0C130.7 126.2 131.8 129.1 132.6 131.3C133.4 133.5 131.2 134.6 130.0 136.0C128.8 137.4 130.3 137.9 125.3 139.7C120.3 141.4 110.5 144.2 100.0 146.5C89.5 148.8 74.3 151.4 62.6 153.2C50.9 155.0 40.4 156.3 30.0 157.5C19.6 158.7 5.0 160.0 0.0 160.5M0.0 137.6C5.0 138.8 19.6 142.4 30.0 145.0C40.4 147.6 51.8 150.0 62.6 153.2C73.4 156.4 85.9 160.7 95.0 164.0C104.1 167.3 111.3 170.0 117.0 173.0C122.7 176.0 126.4 179.2 129.0 182.0C131.6 184.8 132.4 187.3 132.6 189.8C132.8 192.3 131.9 194.9 130.0 197.0C128.1 199.1 126.0 200.5 121.0 202.3C116.0 204.1 106.2 206.3 100.0 208.0C93.8 209.7 93.5 210.5 83.5 212.7C73.5 214.9 53.9 218.4 40.0 221.0C26.1 223.6 6.7 226.8 0.0 228.0M146.0 103.0C153.0 105.6 175.6 114.5 187.9 118.8C200.2 123.1 211.3 125.9 220.0 129.0C228.7 132.1 234.8 135.1 240.0 137.6C245.2 140.1 248.6 141.8 251.0 144.0C253.4 146.2 254.7 148.8 254.7 151.1C254.7 153.4 253.4 155.7 251.0 158.0C248.6 160.3 246.0 162.4 240.0 164.7C234.0 167.0 223.7 169.7 215.0 172.0C206.3 174.3 202.8 176.0 187.9 178.3C173.0 180.6 146.6 183.5 125.3 185.6C104.0 187.7 80.9 189.3 60.0 191.0C39.1 192.7 10.0 195.2 0.0 196.0M0.0 108.0C10.0 110.3 37.7 116.4 60.0 122.0C82.3 127.6 108.8 135.0 133.6 141.8C158.4 148.6 190.0 156.0 208.8 162.6C227.6 169.2 238.8 177.2 246.3 181.4C253.8 185.6 252.4 185.9 254.0 188.0C255.6 190.1 255.9 192.0 255.7 194.0C255.5 196.0 254.9 198.3 253.0 200.0C251.1 201.7 249.8 203.1 244.3 204.4C238.8 205.7 229.4 207.0 220.0 208.0C210.6 209.0 208.0 207.8 188.0 210.6C168.0 213.4 131.3 219.1 100.0 225.0C68.7 230.9 16.7 242.5 0.0 246.0M120.0 103.0C134.8 106.0 185.5 115.9 208.8 120.9C232.1 125.9 244.3 128.8 260.0 133.0C275.6 137.2 291.0 141.8 302.7 146.0C314.4 150.2 323.9 154.8 330.0 158.0C336.1 161.2 337.1 162.8 339.0 165.0C340.9 167.2 341.3 168.8 341.3 171.0C341.3 173.2 341.6 175.2 339.0 178.0C336.4 180.8 332.2 184.9 325.7 187.7C319.2 190.5 309.1 192.9 300.0 195.0C290.9 197.1 286.6 197.9 271.4 200.2C256.2 202.5 237.4 205.6 208.8 208.6C180.2 211.6 134.8 215.3 100.0 218.0C65.2 220.7 16.7 223.8 0.0 225.0M160.0 112.0C171.6 115.2 211.3 126.0 229.6 131.3C247.9 136.6 256.1 139.1 270.0 144.0C283.9 148.9 302.9 155.5 313.2 160.5C323.5 165.5 327.8 170.2 332.0 174.0C336.2 177.8 336.6 179.5 338.2 183.5C339.8 187.5 341.3 194.5 341.3 198.1C341.3 201.7 339.9 202.9 338.0 205.0C336.1 207.1 334.6 208.4 329.9 210.6C325.2 212.8 316.3 215.9 310.0 218.0C303.7 220.1 305.6 220.2 292.3 223.2C279.0 226.2 253.7 231.9 230.0 236.0C206.3 240.1 178.3 244.3 150.0 248.0C121.7 251.7 85.0 255.5 60.0 258.0C35.0 260.5 10.0 262.2 0.0 263.0M180.0 111.0C191.8 114.4 230.5 125.6 250.5 131.3C270.5 137.0 286.1 140.8 300.0 145.0C313.9 149.2 324.0 152.6 334.0 156.4C344.0 160.2 353.0 164.5 360.0 168.0C367.0 171.5 371.5 174.4 375.8 177.2C380.1 180.0 383.4 182.6 386.0 185.0C388.6 187.4 391.5 189.4 391.5 191.4C391.5 193.4 390.4 194.8 386.0 197.0C381.6 199.2 373.0 201.7 365.3 204.4C357.6 207.1 348.7 210.2 340.0 213.0C331.3 215.8 331.6 217.7 313.2 221.1C294.8 224.5 265.1 228.8 229.6 233.6C194.1 238.4 138.3 245.3 100.0 250.0C61.7 254.7 16.7 260.0 0.0 262.0M90.0 103.0C108.3 105.5 168.3 112.5 200.0 118.0C231.7 123.5 256.7 130.0 280.0 136.0C303.3 142.0 324.2 148.0 340.0 154.0C355.8 160.0 366.4 165.8 375.0 172.0C383.6 178.2 388.8 188.2 391.5 191.4M0.0 104.0C25.0 107.0 106.7 115.8 150.0 122.0C193.3 128.2 230.0 134.7 260.0 141.0C290.0 147.3 311.3 153.8 330.0 160.0C348.7 166.2 362.2 173.0 372.0 178.0C381.8 183.0 386.2 188.0 389.0 190.0M0.0 204.4C33.3 207.4 135.0 216.5 200.0 222.5C265.0 228.5 343.7 235.8 390.0 240.5C436.3 245.2 449.7 246.6 478.0 251.0C506.3 255.4 531.2 260.3 560.0 267.0C588.8 273.7 627.7 284.5 651.0 291.0C674.3 297.5 681.7 300.7 700.0 306.0C718.3 311.3 750.8 320.2 761.0 323.0M0.0 216.9C33.3 220.7 135.0 231.8 200.0 239.5C265.0 247.2 340.0 256.6 390.0 262.8C440.0 269.1 465.0 272.1 500.0 277.0C535.0 281.9 566.7 286.2 600.0 292.0C633.3 297.8 673.2 305.7 700.0 311.5C726.8 317.3 750.8 324.4 761.0 327.0M0.0 210.5C33.3 213.9 135.0 224.1 200.0 231.0C265.0 237.9 340.0 246.4 390.0 252.0C440.0 257.6 465.0 259.9 500.0 264.5C535.0 269.1 566.7 273.1 600.0 279.5C633.3 285.9 673.2 295.4 700.0 303.0C726.8 310.6 750.8 321.3 761.0 325.0M0.0 223.0C33.3 226.7 135.0 237.5 200.0 245.0C265.0 252.5 340.0 261.8 390.0 268.0C440.0 274.2 465.0 277.5 500.0 282.5C535.0 287.5 566.7 292.5 600.0 298.0C633.3 303.5 673.2 310.4 700.0 315.5C726.8 320.6 750.8 326.3 761.0 328.5M242.0 217.3L229.5 250.7M321.4 225.6L327.6 263.2M400.7 238.2L425.7 275.7M475.8 248.6L523.8 292.4M555.0 265.3L619.8 307.0M638.6 286.2L701.0 319.5M162.8 209.0L133.6 238.2M83.5 202.7L33.4 232.0M0.0 294.6C16.7 293.7 72.2 290.7 100.0 289.0C127.8 287.3 155.8 285.0 167.0 284.2M0.0 305.0C16.7 304.4 65.2 303.1 100.0 301.5C134.8 299.9 190.7 296.7 208.8 295.7M0.0 280.0C16.7 281.2 66.9 284.4 100.0 287.0C133.1 289.6 181.9 294.2 198.3 295.7M0.0 268.0C16.7 269.8 71.7 275.7 100.0 279.0C128.3 282.3 152.0 285.0 170.0 288.0C188.0 291.0 201.7 295.5 208.0 297.0M0.0 316.0C16.7 315.3 66.7 314.2 100.0 312.0C133.3 309.8 183.3 304.5 200.0 303.0M208.8 294.6C239.0 297.7 298.0 301.9 390.0 313.4C482.0 324.9 699.2 355.1 761.0 363.5M2.0 280.0C3.7 285.0 9.2 300.6 12.0 310.0C14.8 319.4 17.6 330.4 18.8 336.4C20.0 342.4 19.5 343.6 19.3 346.0C19.1 348.4 18.8 349.5 17.7 351.0C16.6 352.5 15.4 354.6 12.5 355.2C9.6 355.8 2.1 354.6 0.0 354.5M359.0 236.0C360.0 240.0 361.5 250.4 365.0 260.0C368.5 269.6 374.2 281.9 380.0 293.6C385.8 305.3 393.4 318.4 400.0 330.0C406.6 341.6 415.7 355.2 419.7 363.5C423.7 371.8 423.5 376.2 424.0 380.0C424.5 383.8 423.7 384.8 422.5 386.5C421.3 388.2 419.9 389.3 417.0 390.0C414.1 390.7 407.0 390.4 405.0 390.5M700.0 278.5C697.5 278.0 689.3 275.9 685.0 275.5C680.7 275.1 676.8 274.9 674.0 276.0C671.2 277.1 669.3 279.7 668.5 282.0C667.7 284.3 668.4 287.2 669.0 290.0C669.6 292.8 668.8 293.0 672.3 298.8C675.8 304.6 683.0 314.9 690.0 325.0C697.0 335.1 706.5 348.5 714.0 359.3C721.5 370.1 728.7 380.6 735.0 390.0C741.3 399.4 748.1 409.4 751.6 415.7C755.1 422.0 755.8 425.0 756.0 428.0C756.2 431.0 755.1 432.2 753.0 433.5C750.9 434.8 748.8 435.7 743.3 435.5C737.8 435.3 723.9 433.0 720.0 432.5"/>
<path stroke-width="2.7" d="M62.6 103.0C85.5 104.8 145.4 108.8 200.0 113.5C254.6 118.2 340.0 125.3 390.0 131.5C440.0 137.7 465.0 144.2 500.0 150.5C535.0 156.8 566.7 162.8 600.0 169.0C633.3 175.2 673.2 182.7 700.0 187.5C726.8 192.3 750.8 196.2 761.0 198.0M146.0 103.0C163.3 105.2 209.3 110.4 250.0 116.0C290.7 121.6 348.3 130.2 390.0 136.5C431.7 142.8 465.0 148.1 500.0 154.0C535.0 159.9 566.7 165.9 600.0 172.0C633.3 178.1 673.2 185.6 700.0 190.5C726.8 195.4 750.8 199.5 761.0 201.3M0.0 116.7C16.7 118.1 66.7 122.1 100.0 125.0C133.3 127.9 166.7 131.0 200.0 134.0C233.3 137.0 268.3 140.0 300.0 143.0C331.7 146.0 365.0 148.6 390.0 152.0C415.0 155.4 428.3 158.9 450.0 163.5C471.7 168.1 495.0 173.8 520.0 179.5C545.0 185.2 570.0 190.8 600.0 197.5C630.0 204.2 673.2 213.9 700.0 219.8C726.8 225.8 750.8 231.0 761.0 233.2M0.0 183.5C20.9 184.4 83.5 186.6 125.3 188.7C167.1 190.8 215.7 194.4 250.5 196.0C285.3 197.6 313.2 198.0 334.0 198.1C354.8 198.2 365.4 197.6 375.0 196.5C384.6 195.4 388.8 192.2 391.5 191.4M0.0 198.1C33.3 201.2 135.0 210.2 200.0 216.5C265.0 222.8 340.0 230.3 390.0 236.0C440.0 241.7 465.0 245.8 500.0 250.5C535.0 255.2 566.7 259.8 600.0 264.5C633.3 269.2 673.2 274.8 700.0 278.5C726.8 282.2 750.8 285.4 761.0 286.8M478.0 250.3C491.7 252.8 531.2 259.0 560.0 265.5C588.8 272.0 627.7 283.0 651.0 289.5C674.3 296.0 681.7 299.1 700.0 304.5C718.3 309.9 750.8 319.1 761.0 322.0M0.0 229.4C33.3 233.0 135.0 243.7 200.0 251.0C265.0 258.3 351.0 268.6 390.0 273.3C429.0 278.0 411.3 275.8 434.0 279.0C456.7 282.2 495.0 287.9 526.0 292.5C557.0 297.1 591.0 302.0 620.0 306.5C649.0 311.0 676.5 315.6 700.0 319.5C723.5 323.4 750.8 328.2 761.0 330.0M0.0 256.6C16.7 259.2 75.0 268.1 100.0 272.0C125.0 275.9 135.6 277.2 150.3 280.0C165.0 282.8 178.9 286.7 188.0 289.0C197.1 291.3 200.3 292.3 204.6 293.6C208.9 294.9 212.0 295.9 214.0 297.0C216.0 298.1 216.8 299.3 216.5 300.5C216.2 301.7 215.0 303.1 212.0 304.0C209.0 304.9 212.8 304.9 198.3 305.8C183.9 306.7 148.3 308.2 125.3 309.2C102.2 310.1 80.9 310.8 60.0 311.5C39.1 312.2 10.0 313.1 0.0 313.4M0.0 345.8C16.8 347.1 69.5 350.6 100.8 353.5C132.1 356.4 139.8 357.6 188.0 363.5C236.2 369.4 326.7 378.9 390.0 388.6C453.3 398.4 506.2 410.4 568.0 422.0C629.8 433.6 728.8 452.4 761.0 458.5M0.0 355.2C31.3 357.3 123.0 362.0 188.0 367.7C253.0 373.4 326.7 380.7 390.0 389.6C453.3 398.5 506.2 410.2 568.0 421.0C629.8 431.8 728.8 448.8 761.0 454.3M421.8 392.7C451.5 396.8 543.5 409.5 600.0 417.0C656.5 424.5 734.2 434.2 761.0 437.6"/>
</svg></div>
<div class="vp" id="vpBL" style="left:0;top:697px;width:761px;height:416px"><svg width="1869" height="1113" viewBox="0 0 1869 1113" style="left:0;top:-697px" fill="none">
<rect x="180.2" y="711.3" width="192.7" height="192.5" fill="#979ca3"/>
<path d="M180.20 711.3V903.8M180.2 711.30H372.9M185.02 711.3V903.8M180.2 716.11H372.9M189.83 711.3V903.8M180.2 720.92H372.9M194.65 711.3V903.8M180.2 725.74H372.9M199.47 711.3V903.8M180.2 730.55H372.9M204.29 711.3V903.8M180.2 735.36H372.9M209.10 711.3V903.8M180.2 740.17H372.9M213.92 711.3V903.8M180.2 744.99H372.9M218.74 711.3V903.8M180.2 749.80H372.9M223.56 711.3V903.8M180.2 754.61H372.9M228.38 711.3V903.8M180.2 759.42H372.9M233.19 711.3V903.8M180.2 764.24H372.9M238.01 711.3V903.8M180.2 769.05H372.9M242.83 711.3V903.8M180.2 773.86H372.9M247.64 711.3V903.8M180.2 778.67H372.9M252.46 711.3V903.8M180.2 783.49H372.9M257.28 711.3V903.8M180.2 788.30H372.9M262.10 711.3V903.8M180.2 793.11H372.9M266.91 711.3V903.8M180.2 797.92H372.9M271.73 711.3V903.8M180.2 802.74H372.9M276.55 711.3V903.8M180.2 807.55H372.9M281.37 711.3V903.8M180.2 812.36H372.9M286.18 711.3V903.8M180.2 817.17H372.9M291.00 711.3V903.8M180.2 821.99H372.9M295.82 711.3V903.8M180.2 826.80H372.9M300.64 711.3V903.8M180.2 831.61H372.9M305.45 711.3V903.8M180.2 836.42H372.9M310.27 711.3V903.8M180.2 841.24H372.9M315.09 711.3V903.8M180.2 846.05H372.9M319.91 711.3V903.8M180.2 850.86H372.9M324.73 711.3V903.8M180.2 855.67H372.9M329.54 711.3V903.8M180.2 860.49H372.9M334.36 711.3V903.8M180.2 865.30H372.9M339.18 711.3V903.8M180.2 870.11H372.9M344.00 711.3V903.8M180.2 874.92H372.9M348.81 711.3V903.8M180.2 879.74H372.9M353.63 711.3V903.8M180.2 884.55H372.9M358.45 711.3V903.8M180.2 889.36H372.9M363.26 711.3V903.8M180.2 894.17H372.9M368.08 711.3V903.8M180.2 898.99H372.9M372.90 711.3V903.8M180.2 903.80H372.9" stroke="#82878e" stroke-width="1"/>
<path d="M180.20 711.3V903.8M180.2 711.30H372.9M204.29 711.3V903.8M180.2 735.36H372.9M228.38 711.3V903.8M180.2 759.42H372.9M252.46 711.3V903.8M180.2 783.49H372.9M276.55 711.3V903.8M180.2 807.55H372.9M300.64 711.3V903.8M180.2 831.61H372.9M324.73 711.3V903.8M180.2 855.67H372.9M348.81 711.3V903.8M180.2 879.74H372.9M372.90 711.3V903.8M180.2 903.80H372.9" stroke="#7b8087" stroke-width="1"/>
<path d="M276.5 807.5H372.9" stroke="#9e4642" stroke-width="1.5"/>
<path d="M276.5 711.3V807" stroke="#4b8a4b" stroke-width="1.2"/>
<path stroke="#7b2bcf" stroke-width="1.2" d="M182.0 746.0C182.7 744.7 183.7 740.7 186.0 738.0C188.3 735.3 191.7 732.3 196.0 730.0C200.3 727.7 205.5 725.4 212.0 724.0C218.5 722.6 217.3 722.2 235.0 721.8C252.7 721.4 300.3 721.4 318.0 721.8C335.7 722.2 334.5 722.6 341.0 724.0C347.5 725.4 352.7 727.7 357.0 730.0C361.3 732.3 364.7 735.3 367.0 738.0C369.3 740.7 370.3 744.7 371.0 746.0M224.0 746.0C224.3 744.3 224.7 739.2 226.0 736.0C227.3 732.8 229.5 729.3 232.0 727.0C234.5 724.7 239.5 722.8 241.0 722.0M329.0 746.0C328.7 744.3 328.3 739.2 327.0 736.0C325.7 732.8 323.5 729.3 321.0 727.0C318.5 724.7 313.5 722.8 312.0 722.0M180.0 731.3L373.4 731.3M180.0 740.4L373.4 740.4M225.6 756.0L225.6 871.0M327.4 756.0L327.4 871.0M274.1 757.0L274.1 870.7M278.9 757.0L278.9 870.7M181.8 863.4L371.2 863.4M192.5 899.9L360.5 899.9M259.9 853.3L293.1 853.3M264.0 854.8C266.1 855.2 272.3 857.0 276.5 857.0C280.7 857.0 286.9 855.2 289.0 854.8M220.0 908.3L231.8 908.3L229.6 921.0L228.0 922.6L224.4 922.6L222.8 921.0ZM321.2 908.3L333.0 908.3L330.2 921.0L328.6 922.6L325.0 922.6L323.4 921.0ZM223.5 911.0L224.6 921.0M228.4 911.0L227.6 921.0M324.7 911.0L325.6 921.0M329.5 911.0L328.6 921.0"/>
<path stroke="#7b2bcf" stroke-width="2.1" d="M181.2 746.0C181.5 744.5 181.5 740.2 183.0 737.0C184.5 733.8 186.5 730.2 190.0 727.0C193.5 723.8 198.2 720.3 204.0 718.0C209.8 715.7 217.3 714.2 225.0 713.3C232.7 712.4 237.0 712.5 250.0 712.4C263.0 712.2 290.0 712.2 303.0 712.4C316.0 712.5 320.3 712.4 328.0 713.3C335.7 714.2 343.2 715.7 349.0 718.0C354.8 720.3 359.5 723.8 363.0 727.0C366.5 730.2 368.5 733.8 370.0 737.0C371.5 740.2 371.5 744.5 371.8 746.0M218.3 746.0C218.6 744.2 218.7 738.7 220.0 735.0C221.3 731.3 223.5 727.2 226.0 724.0C228.5 720.8 231.7 717.9 235.0 716.0C238.3 714.1 244.2 713.2 246.0 712.6M334.7 746.0C334.4 744.2 334.3 738.7 333.0 735.0C331.7 731.3 329.5 727.2 327.0 724.0C324.5 720.8 321.3 717.9 318.0 716.0C314.7 714.1 308.8 713.2 307.0 712.6M190.8 720.8L362.7 720.8M190.0 730.3L363.0 730.3M183.0 756.0C183.2 765.0 183.6 795.4 184.0 810.0C184.4 824.6 185.0 833.2 185.7 843.7C186.4 854.2 186.9 865.0 188.0 872.9C189.1 880.8 190.4 885.6 192.5 890.9C194.6 896.1 197.5 901.2 200.3 904.4C203.1 907.6 206.5 908.7 209.3 910.0C212.1 911.3 215.9 911.7 217.2 912.0M370.0 756.0C369.8 765.0 369.4 795.4 369.0 810.0C368.6 824.6 368.0 833.2 367.3 843.7C366.6 854.2 366.1 865.0 365.0 872.9C363.9 880.8 362.6 885.6 360.5 890.9C358.4 896.1 355.5 901.2 352.7 904.4C349.9 907.6 346.5 908.7 343.7 910.0C340.9 911.3 337.1 911.7 335.8 912.0M217.0 912.0L336.0 912.0M220.2 746.0C220.3 756.7 220.6 791.8 220.8 810.0C221.1 828.2 221.2 843.8 221.7 855.0C222.2 866.2 222.8 870.3 223.9 877.4C225.0 884.5 226.2 892.0 228.4 897.6C230.7 903.2 235.9 908.8 237.4 911.0M332.8 746.0C332.7 756.7 332.4 791.8 332.2 810.0C331.9 828.2 331.8 843.8 331.3 855.0C330.8 866.2 330.2 870.3 329.1 877.4C328.0 884.5 326.9 892.0 324.6 897.6C322.4 903.2 317.1 908.8 315.6 911.0M225.6 871.0L327.4 871.0M276.5 712.4L276.5 911.0M180.1 831.3C183.4 829.9 193.2 825.4 200.0 823.0C206.8 820.6 212.3 818.5 220.6 817.2C228.9 815.9 240.7 815.7 250.0 815.3C259.3 814.9 267.7 814.8 276.5 814.8C285.3 814.8 293.7 814.9 303.0 815.3C312.3 815.7 324.1 815.9 332.4 817.2C340.7 818.5 346.2 820.6 353.0 823.0C359.8 825.4 369.6 829.9 372.9 831.3M185.2 883.6C188.5 883.0 198.2 881.1 205.0 880.3C211.8 879.4 214.3 879.0 226.2 878.5C238.1 878.0 259.7 877.4 276.5 877.4C293.3 877.4 314.9 878.0 326.8 878.5C338.7 879.0 341.2 879.4 348.0 880.3C354.8 881.1 364.5 883.0 367.8 883.6M276.5 859.4C271.7 859.4 266.1 857.7 262.0 855.5C257.9 853.3 254.4 849.8 252.0 846.0C249.6 842.2 248.4 841.8 247.7 832.5C246.9 823.2 247.3 799.0 247.5 790.0C247.7 781.0 247.6 782.5 248.7 778.7C249.8 774.9 251.6 770.1 254.0 767.0C256.4 763.9 259.2 761.6 263.0 760.0C266.8 758.4 272.0 757.3 276.5 757.3C281.0 757.3 286.2 758.4 290.0 760.0C293.8 761.6 296.6 763.9 299.0 767.0C301.4 770.1 303.2 774.9 304.3 778.7C305.4 782.5 305.3 781.0 305.5 790.0C305.7 799.0 306.1 823.2 305.3 832.5C304.6 841.8 303.4 842.2 301.0 846.0C298.6 849.8 295.1 853.3 291.0 855.5C286.9 857.7 281.3 859.4 276.5 859.4Z"/>
<rect x="175.6" y="745.3" width="201.8" height="6.9" fill="#7b2bcf"/>
<path d="M176 754H377M175.6 756.3H377.4" stroke="#7b2bcf" stroke-width="1.3"/>
<path d="M187 750.6H203M207 751H219M226 751H330M334 751H346M351 750.6H366" stroke="#9a72d4" stroke-width="0.7" stroke-dasharray="5 2 9 3"/>
<circle cx="276.7" cy="778.7" r="14.6" stroke="#7b2bcf" stroke-width="1.8"/><path d="M268.7 766.5H284.7M265.9 768.9H287.5M264.1 771.3H289.3M263.0 773.7H290.4M262.3 776.1H291.1M262.1 778.5H291.3M262.3 780.9H291.1M262.8 783.3H290.6M263.9 785.7H289.5M265.5 788.1H287.9M268.1 790.5H285.3M273.3 792.9H280.1" stroke="#7b2bcf" stroke-width="1"/>
<circle cx="276.7" cy="828.5" r="12.2" stroke="#7b2bcf" stroke-width="1.8"/><path d="M270.0 818.3H283.4M267.7 820.3H285.7M266.2 822.3H287.2M265.2 824.3H288.2M264.7 826.3H288.7M264.5 828.3H288.9M264.6 830.3H288.8M265.1 832.3H288.3M266.0 834.3H287.4M267.3 836.3H286.1M269.4 838.3H284.0M273.6 840.3H279.8" stroke="#7b2bcf" stroke-width="1"/>
<rect x="253.1" y="798.9" width="19.7" height="11.8" rx="5.9" fill="#7b2bcf" fill-opacity="0.88" stroke="#7b2bcf" stroke-width="1.4"/>
<rect x="279.6" y="798.9" width="20.7" height="11.8" rx="5.9" fill="#7b2bcf" fill-opacity="0.88" stroke="#7b2bcf" stroke-width="1.4"/>
</svg></div>
<div class="vp" id="vpTR" style="left:769px;top:103px;width:1100px;height:568px"><svg width="1869" height="1113" viewBox="0 0 1869 1113" style="left:-769px;top:-103px" fill="none">
<defs>
<linearGradient id="gb" gradientUnits="userSpaceOnUse" x1="1037" y1="0" x2="1430" y2="0">
<stop offset="0" stop-color="#7d589c"/><stop offset="0.03" stop-color="#72489a"/><stop offset="0.075" stop-color="#5f3588"/><stop offset="0.25" stop-color="#6a3896"/>
<stop offset="0.31" stop-color="#6e3a9a"/><stop offset="0.355" stop-color="#7543a3"/><stop offset="0.385" stop-color="#8a5cbc"/><stop offset="0.425" stop-color="#9868c8"/>
<stop offset="0.47" stop-color="#8a58bc"/><stop offset="0.53" stop-color="#7a44aa"/><stop offset="0.62" stop-color="#763fa6"/><stop offset="0.78" stop-color="#7841a8"/><stop offset="0.9" stop-color="#7340a3"/>
<stop offset="0.955" stop-color="#8050b0"/><stop offset="0.98" stop-color="#7e52aa"/><stop offset="1" stop-color="#6c3c96"/></linearGradient>
<linearGradient id="gd" gradientUnits="userSpaceOnUse" x1="0" y1="420" x2="0" y2="556">
<stop offset="0" stop-color="#5a2892" stop-opacity="0"/><stop offset="0.2" stop-color="#5a2892" stop-opacity="0.1"/><stop offset="0.43" stop-color="#58268f" stop-opacity="0.5"/><stop offset="0.65" stop-color="#52228a" stop-opacity="0.8"/><stop offset="0.88" stop-color="#4c1e80" stop-opacity="0.9"/><stop offset="1" stop-color="#481b78" stop-opacity="0.94"/></linearGradient>
<linearGradient id="gl" gradientUnits="userSpaceOnUse" x1="0" y1="184" x2="0" y2="248">
<stop offset="0" stop-color="#371860"/><stop offset="0.2" stop-color="#401c6c"/><stop offset="0.26" stop-color="#45207a"/><stop offset="0.5" stop-color="#5e3090"/><stop offset="0.62" stop-color="#6e3ea0"/><stop offset="0.85" stop-color="#8656b8"/><stop offset="1" stop-color="#9a68c8"/></linearGradient>
<linearGradient id="gr" gradientUnits="userSpaceOnUse" x1="1037" y1="0" x2="1430" y2="0">
<stop offset="0" stop-color="#7e58a4"/><stop offset="0.08" stop-color="#7a50a4"/><stop offset="0.2" stop-color="#6e409c"/><stop offset="0.36" stop-color="#7644a4"/><stop offset="0.41" stop-color="#9462c2"/><stop offset="0.46" stop-color="#9a68c8"/><stop offset="0.55" stop-color="#8452b4"/><stop offset="0.7" stop-color="#7c48ac"/><stop offset="0.9" stop-color="#8a5aba"/><stop offset="0.97" stop-color="#9666c4"/><stop offset="1" stop-color="#8656b4"/></linearGradient>
<radialGradient id="gh" gradientUnits="userSpaceOnUse" cx="1175" cy="209" r="60" gradientTransform="translate(1175 209) scale(1 0.16) translate(-1175 -209)">
<stop offset="0" stop-color="#9a6ccc" stop-opacity="0.55"/><stop offset="1" stop-color="#9a6ccc" stop-opacity="0"/></radialGradient>
<linearGradient id="gle" gradientUnits="userSpaceOnUse" x1="1037" y1="0" x2="1430" y2="0">
<stop offset="0" stop-color="#b090c8" stop-opacity="0.12"/><stop offset="0.08" stop-color="#b090c8" stop-opacity="0"/><stop offset="0.92" stop-color="#301050" stop-opacity="0"/><stop offset="1" stop-color="#301050" stop-opacity="0.3"/></linearGradient>
<linearGradient id="go1" gradientUnits="userSpaceOnUse" x1="0" y1="282" x2="0" y2="341">
<stop offset="0" stop-color="#9c70cc"/><stop offset="0.3" stop-color="#8a5cba"/><stop offset="0.5" stop-color="#6a3a9a"/><stop offset="1" stop-color="#50268a"/></linearGradient>
<linearGradient id="go2" gradientUnits="userSpaceOnUse" x1="1113" y1="390" x2="1094" y2="408">
<stop offset="0" stop-color="#a88cca"/><stop offset="0.35" stop-color="#8a64b8"/><stop offset="0.7" stop-color="#60308e"/><stop offset="1" stop-color="#582a88"/></linearGradient>
<radialGradient id="gs" gradientUnits="userSpaceOnUse" cx="1345" cy="480" r="60"><stop offset="0" stop-color="#8a58bc" stop-opacity="0.4"/><stop offset="1" stop-color="#8a58bc" stop-opacity="0"/></radialGradient>
</defs>
<path d="M1008 349.3L1050 344.8L1051 354.8Z" fill="#8a8e95"/>
<path d="M1420 340L1465 343.5L1420 351.2Z" fill="#8a8e95"/>
<path d="M1228.7 552L1244.6 552L1241.3 571.8L1240 573L1233 573L1232 571.8Z" fill="#5c2896" stroke="#7b2bcf" stroke-width="1"/>
<path d="M1230.5 562H1243" stroke="#7b2bcf" stroke-width="0.8"/>
<path d="M1108.5 533.5L1116.5 537.5L1115 540.6L1110.3 539.4Z" fill="#6a30a8" stroke="#7b2bcf" stroke-width="0.8"/>
<path d="M1363.5 523L1375 519L1373.4 525.9L1367.5 526.8Z" fill="#6a30a8" stroke="#7b2bcf" stroke-width="0.8"/>
<path d="M1041.8 266.0C1042.1 271.7 1042.4 286.8 1043.5 300.0C1044.6 313.2 1047.0 333.2 1048.3 345.3C1049.6 357.4 1050.2 361.6 1051.2 372.4C1052.2 383.2 1053.0 398.3 1054.0 410.0C1055.0 421.7 1056.1 433.0 1057.2 442.4C1058.3 451.8 1059.2 459.9 1060.5 466.6C1061.8 473.3 1063.1 477.1 1065.3 482.8C1067.5 488.5 1070.2 495.2 1073.4 500.6C1076.6 506.0 1080.1 510.6 1084.7 515.2C1089.3 519.8 1095.0 524.3 1100.9 528.1C1106.8 531.9 1112.2 534.6 1120.3 537.8C1128.4 541.0 1139.2 545.1 1149.4 547.5C1159.7 549.9 1172.3 551.3 1181.8 552.4C1191.2 553.5 1196.4 553.7 1206.1 554.0C1215.8 554.3 1230.6 554.3 1240.0 554.0C1249.4 553.7 1253.3 553.4 1262.4 552.4C1271.5 551.4 1283.9 550.2 1294.7 548.3C1305.5 546.4 1316.3 544.5 1327.1 541.1C1337.9 537.7 1350.6 532.7 1359.5 528.1C1368.4 523.5 1374.6 518.7 1380.5 513.6C1386.4 508.5 1390.7 503.3 1395.0 497.4C1399.3 491.5 1403.4 484.5 1406.4 478.0C1409.4 471.5 1411.0 465.8 1412.8 458.5C1414.5 451.2 1416.1 442.4 1416.9 434.3C1417.7 426.2 1417.4 416.2 1417.7 410.0C1418.0 403.8 1418.1 404.7 1418.6 397.0C1419.1 389.3 1419.9 374.8 1420.6 363.6C1421.3 352.5 1421.9 342.4 1422.6 330.1C1423.3 317.8 1423.9 301.7 1424.6 290.0C1425.3 278.3 1426.3 265.0 1426.6 260.0L1240 250Z" fill="url(#gb)"/>
<path d="M1041.8 266.0C1042.1 271.7 1042.4 286.8 1043.5 300.0C1044.6 313.2 1047.0 333.2 1048.3 345.3C1049.6 357.4 1050.2 361.6 1051.2 372.4C1052.2 383.2 1053.0 398.3 1054.0 410.0C1055.0 421.7 1056.1 433.0 1057.2 442.4C1058.3 451.8 1059.2 459.9 1060.5 466.6C1061.8 473.3 1063.1 477.1 1065.3 482.8C1067.5 488.5 1070.2 495.2 1073.4 500.6C1076.6 506.0 1080.1 510.6 1084.7 515.2C1089.3 519.8 1095.0 524.3 1100.9 528.1C1106.8 531.9 1112.2 534.6 1120.3 537.8C1128.4 541.0 1139.2 545.1 1149.4 547.5C1159.7 549.9 1172.3 551.3 1181.8 552.4C1191.2 553.5 1196.4 553.7 1206.1 554.0C1215.8 554.3 1230.6 554.3 1240.0 554.0C1249.4 553.7 1253.3 553.4 1262.4 552.4C1271.5 551.4 1283.9 550.2 1294.7 548.3C1305.5 546.4 1316.3 544.5 1327.1 541.1C1337.9 537.7 1350.6 532.7 1359.5 528.1C1368.4 523.5 1374.6 518.7 1380.5 513.6C1386.4 508.5 1390.7 503.3 1395.0 497.4C1399.3 491.5 1403.4 484.5 1406.4 478.0C1409.4 471.5 1411.0 465.8 1412.8 458.5C1414.5 451.2 1416.1 442.4 1416.9 434.3C1417.7 426.2 1417.4 416.2 1417.7 410.0C1418.0 403.8 1418.1 404.7 1418.6 397.0C1419.1 389.3 1419.9 374.8 1420.6 363.6C1421.3 352.5 1421.9 342.4 1422.6 330.1C1423.3 317.8 1423.9 301.7 1424.6 290.0C1425.3 278.3 1426.3 265.0 1426.6 260.0L1240 250Z" fill="url(#gs)"/>
<clipPath id="cb"><path d="M1041.8 266.0C1042.1 271.7 1042.4 286.8 1043.5 300.0C1044.6 313.2 1047.0 333.2 1048.3 345.3C1049.6 357.4 1050.2 361.6 1051.2 372.4C1052.2 383.2 1053.0 398.3 1054.0 410.0C1055.0 421.7 1056.1 433.0 1057.2 442.4C1058.3 451.8 1059.2 459.9 1060.5 466.6C1061.8 473.3 1063.1 477.1 1065.3 482.8C1067.5 488.5 1070.2 495.2 1073.4 500.6C1076.6 506.0 1080.1 510.6 1084.7 515.2C1089.3 519.8 1095.0 524.3 1100.9 528.1C1106.8 531.9 1112.2 534.6 1120.3 537.8C1128.4 541.0 1139.2 545.1 1149.4 547.5C1159.7 549.9 1172.3 551.3 1181.8 552.4C1191.2 553.5 1196.4 553.7 1206.1 554.0C1215.8 554.3 1230.6 554.3 1240.0 554.0C1249.4 553.7 1253.3 553.4 1262.4 552.4C1271.5 551.4 1283.9 550.2 1294.7 548.3C1305.5 546.4 1316.3 544.5 1327.1 541.1C1337.9 537.7 1350.6 532.7 1359.5 528.1C1368.4 523.5 1374.6 518.7 1380.5 513.6C1386.4 508.5 1390.7 503.3 1395.0 497.4C1399.3 491.5 1403.4 484.5 1406.4 478.0C1409.4 471.5 1411.0 465.8 1412.8 458.5C1414.5 451.2 1416.1 442.4 1416.9 434.3C1417.7 426.2 1417.4 416.2 1417.7 410.0C1418.0 403.8 1418.1 404.7 1418.6 397.0C1419.1 389.3 1419.9 374.8 1420.6 363.6C1421.3 352.5 1421.9 342.4 1422.6 330.1C1423.3 317.8 1423.9 301.7 1424.6 290.0C1425.3 278.3 1426.3 265.0 1426.6 260.0L1240 250Z"/></clipPath><filter id="fb" x="-10%" y="-10%" width="120%" height="130%"><feGaussianBlur stdDeviation="5.5"/></filter>
<g clip-path="url(#cb)"><g filter="url(#fb)">
<path d="M1030.0 445.0C1034.8 447.4 1051.3 455.8 1058.8 459.5C1066.3 463.2 1068.5 464.4 1075.0 467.0C1081.5 469.6 1085.3 472.2 1097.7 474.9C1110.1 477.6 1131.3 481.3 1149.4 483.0C1167.5 484.7 1191.0 484.8 1206.1 484.9C1221.2 485.0 1222.5 485.3 1240.0 483.8C1257.5 482.3 1291.0 479.1 1310.9 475.7C1330.8 472.3 1343.8 467.9 1359.5 463.5C1375.2 459.1 1395.4 452.4 1404.8 449.0C1414.2 445.6 1410.2 446.5 1416.1 443.3C1422.0 440.1 1436.0 432.2 1440.0 430.0L1440 600L1030 600Z" fill="#642c98" fill-opacity="0.75"/>
<path d="M1030.0 469.0C1035.8 471.7 1056.2 481.3 1064.5 485.2C1072.8 489.1 1073.9 490.1 1080.0 492.5C1086.1 494.9 1089.3 497.1 1100.9 499.8C1112.5 502.5 1133.2 506.5 1149.4 508.7C1165.6 510.9 1182.9 512.0 1198.0 512.7C1213.1 513.4 1222.0 513.5 1240.0 513.0C1258.0 512.5 1286.2 512.2 1306.1 509.5C1326.0 506.8 1344.4 500.8 1359.5 496.5C1374.6 492.2 1388.6 487.0 1396.7 483.6C1404.8 480.2 1400.8 480.9 1408.0 476.3C1415.2 471.7 1434.7 459.4 1440.0 456.0L1440 600L1030 600Z" fill="#5a2292" fill-opacity="0.8"/>
<path d="M1040.0 494.0C1047.2 497.9 1073.4 512.2 1083.1 517.6C1092.8 523.0 1092.3 523.7 1098.0 526.5C1103.7 529.3 1108.5 532.1 1117.1 534.6C1125.7 537.1 1135.9 539.9 1149.4 541.8C1162.9 543.7 1182.9 545.3 1198.0 545.9C1213.1 546.5 1222.8 546.8 1240.0 545.4C1257.2 544.0 1284.0 541.1 1301.2 537.8C1318.4 534.5 1330.9 529.6 1343.3 525.7C1355.7 521.8 1368.6 517.0 1375.6 514.3C1382.6 511.6 1374.6 514.9 1385.3 509.5C1396.0 504.1 1430.9 486.6 1440.0 482.0L1440 600L1030 600Z" fill="#4e1c80" fill-opacity="0.7"/>
</g></g>
<path d="M1041.8 266.0C1042.1 271.7 1042.4 286.8 1043.5 300.0C1044.6 313.2 1047.0 333.2 1048.3 345.3C1049.6 357.4 1050.2 361.6 1051.2 372.4C1052.2 383.2 1053.0 398.3 1054.0 410.0C1055.0 421.7 1056.1 433.0 1057.2 442.4C1058.3 451.8 1059.2 459.9 1060.5 466.6C1061.8 473.3 1063.1 477.1 1065.3 482.8C1067.5 488.5 1070.2 495.2 1073.4 500.6C1076.6 506.0 1080.1 510.6 1084.7 515.2C1089.3 519.8 1095.0 524.3 1100.9 528.1C1106.8 531.9 1112.2 534.6 1120.3 537.8C1128.4 541.0 1139.2 545.1 1149.4 547.5C1159.7 549.9 1172.3 551.3 1181.8 552.4C1191.2 553.5 1196.4 553.7 1206.1 554.0C1215.8 554.3 1230.6 554.3 1240.0 554.0C1249.4 553.7 1253.3 553.4 1262.4 552.4C1271.5 551.4 1283.9 550.2 1294.7 548.3C1305.5 546.4 1316.3 544.5 1327.1 541.1C1337.9 537.7 1350.6 532.7 1359.5 528.1C1368.4 523.5 1374.6 518.7 1380.5 513.6C1386.4 508.5 1390.7 503.3 1395.0 497.4C1399.3 491.5 1403.4 484.5 1406.4 478.0C1409.4 471.5 1411.0 465.8 1412.8 458.5C1414.5 451.2 1416.1 442.4 1416.9 434.3C1417.7 426.2 1417.4 416.2 1417.7 410.0C1418.0 403.8 1418.1 404.7 1418.6 397.0C1419.1 389.3 1419.9 374.8 1420.6 363.6C1421.3 352.5 1421.9 342.4 1422.6 330.1C1423.3 317.8 1423.9 301.7 1424.6 290.0C1425.3 278.3 1426.3 265.0 1426.6 260.0" stroke="#7b2bcf" stroke-width="1.3"/>
<path d="M1037.1 246.5C1044.2 246.9 1063.2 248.2 1080.0 248.9C1096.8 249.6 1117.7 250.3 1137.7 250.8C1157.7 251.3 1183.0 251.6 1200.0 251.8C1217.0 252.0 1221.3 252.2 1240.0 251.8C1258.7 251.4 1289.1 250.1 1312.4 249.2C1335.7 248.3 1360.5 247.1 1380.0 246.2C1399.5 245.3 1421.2 244.0 1429.5 243.6L1428.9 259.5C1423.2 260.1 1414.2 261.6 1394.8 263.0C1375.4 264.4 1339.9 266.5 1312.4 267.7C1284.9 268.9 1255.4 269.8 1230.0 270.1C1204.6 270.5 1181.3 270.1 1160.0 269.8C1138.7 269.5 1122.7 269.2 1102.4 268.3C1082.1 267.4 1048.9 264.9 1038.2 264.2Z" fill="url(#gr)"/>
<path d="M1037.1 246.5C1037.2 244.7 1037.1 239.2 1037.7 235.9C1038.3 232.6 1039.4 229.4 1040.6 226.5C1041.8 223.6 1042.5 221.4 1044.7 218.3C1047.0 215.2 1050.4 210.9 1054.1 207.7C1057.8 204.4 1062.0 201.6 1067.1 198.8C1072.2 196.1 1077.8 193.3 1084.7 191.2C1091.6 189.0 1099.5 187.0 1108.3 185.9C1117.1 184.8 1115.8 184.7 1137.7 184.4C1159.7 184.1 1214.8 183.9 1240.0 183.9C1265.2 183.9 1272.9 184.2 1288.9 184.4C1304.9 184.6 1324.1 184.8 1335.9 185.3C1347.7 185.9 1351.7 186.4 1359.5 187.7C1367.3 189.0 1376.1 191.2 1383.0 193.0C1389.9 194.8 1395.6 196.6 1400.7 198.8C1405.8 201.1 1410.1 203.7 1413.6 206.5C1417.1 209.3 1419.7 212.8 1421.9 215.9C1424.1 219.0 1425.4 222.0 1426.6 225.3C1427.8 228.6 1428.4 232.9 1428.9 235.9C1429.4 238.9 1429.4 242.3 1429.5 243.6L1429.5 243.6C1421.2 244.0 1399.5 245.3 1380.0 246.2C1360.5 247.1 1335.7 248.3 1312.4 249.2C1289.1 250.1 1258.7 251.4 1240.0 251.8C1221.3 252.2 1217.0 252.0 1200.0 251.8C1183.0 251.6 1157.7 251.3 1137.7 250.8C1117.7 250.3 1096.8 249.6 1080.0 248.9C1063.2 248.2 1044.2 246.9 1037.1 246.5Z" fill="url(#gl)"/>
<path d="M1037.1 246.5C1037.2 244.7 1037.1 239.2 1037.7 235.9C1038.3 232.6 1039.4 229.4 1040.6 226.5C1041.8 223.6 1042.5 221.4 1044.7 218.3C1047.0 215.2 1050.4 210.9 1054.1 207.7C1057.8 204.4 1062.0 201.6 1067.1 198.8C1072.2 196.1 1077.8 193.3 1084.7 191.2C1091.6 189.0 1099.5 187.0 1108.3 185.9C1117.1 184.8 1115.8 184.7 1137.7 184.4C1159.7 184.1 1214.8 183.9 1240.0 183.9C1265.2 183.9 1272.9 184.2 1288.9 184.4C1304.9 184.6 1324.1 184.8 1335.9 185.3C1347.7 185.9 1351.7 186.4 1359.5 187.7C1367.3 189.0 1376.1 191.2 1383.0 193.0C1389.9 194.8 1395.6 196.6 1400.7 198.8C1405.8 201.1 1410.1 203.7 1413.6 206.5C1417.1 209.3 1419.7 212.8 1421.9 215.9C1424.1 219.0 1425.4 222.0 1426.6 225.3C1427.8 228.6 1428.4 232.9 1428.9 235.9C1429.4 238.9 1429.4 242.3 1429.5 243.6L1429.5 243.6C1421.2 244.0 1399.5 245.3 1380.0 246.2C1360.5 247.1 1335.7 248.3 1312.4 249.2C1289.1 250.1 1258.7 251.4 1240.0 251.8C1221.3 252.2 1217.0 252.0 1200.0 251.8C1183.0 251.6 1157.7 251.3 1137.7 250.8C1117.7 250.3 1096.8 249.6 1080.0 248.9C1063.2 248.2 1044.2 246.9 1037.1 246.5Z" fill="url(#gle)"/>
<path d="M1037.1 246.5C1037.2 244.7 1037.1 239.2 1037.7 235.9C1038.3 232.6 1039.4 229.4 1040.6 226.5C1041.8 223.6 1042.5 221.4 1044.7 218.3C1047.0 215.2 1050.4 210.9 1054.1 207.7C1057.8 204.4 1062.0 201.6 1067.1 198.8C1072.2 196.1 1077.8 193.3 1084.7 191.2C1091.6 189.0 1099.5 187.0 1108.3 185.9C1117.1 184.8 1115.8 184.7 1137.7 184.4C1159.7 184.1 1214.8 183.9 1240.0 183.9C1265.2 183.9 1272.9 184.2 1288.9 184.4C1304.9 184.6 1324.1 184.8 1335.9 185.3C1347.7 185.9 1351.7 186.4 1359.5 187.7C1367.3 189.0 1376.1 191.2 1383.0 193.0C1389.9 194.8 1395.6 196.6 1400.7 198.8C1405.8 201.1 1410.1 203.7 1413.6 206.5C1417.1 209.3 1419.7 212.8 1421.9 215.9C1424.1 219.0 1425.4 222.0 1426.6 225.3C1427.8 228.6 1428.4 232.9 1428.9 235.9C1429.4 238.9 1429.4 242.3 1429.5 243.6L1429.5 243.6C1421.2 244.0 1399.5 245.3 1380.0 246.2C1360.5 247.1 1335.7 248.3 1312.4 249.2C1289.1 250.1 1258.7 251.4 1240.0 251.8C1221.3 252.2 1217.0 252.0 1200.0 251.8C1183.0 251.6 1157.7 251.3 1137.7 250.8C1117.7 250.3 1096.8 249.6 1080.0 248.9C1063.2 248.2 1044.2 246.9 1037.1 246.5Z" fill="url(#gh)"/>
<path d="M1083.6 272.4C1079.3 272.4 1074.9 273.9 1071.8 275.9C1068.7 277.9 1066.5 281.0 1064.7 284.2C1062.9 287.4 1062.0 289.9 1061.2 294.8C1060.4 299.7 1059.8 304.5 1060.0 313.5C1060.2 322.5 1061.5 337.1 1062.4 348.9C1063.3 360.7 1064.5 374.0 1065.3 384.2C1066.0 394.4 1065.8 402.5 1066.9 410.0C1068.0 417.5 1069.4 423.2 1071.8 429.4C1074.2 435.6 1078.0 442.3 1081.5 447.2C1085.0 452.1 1088.5 455.9 1092.8 458.5C1097.1 461.1 1102.8 462.9 1107.4 462.6C1112.0 462.3 1116.2 460.8 1120.3 456.9C1124.3 453.0 1128.9 445.6 1131.7 439.1C1134.5 432.6 1136.3 423.8 1137.3 418.1C1138.3 412.4 1137.9 410.6 1137.5 405.0C1137.1 399.4 1135.5 391.6 1134.8 384.2C1134.0 376.8 1133.7 370.4 1133.0 360.6C1132.3 350.8 1131.9 333.7 1130.7 325.3C1129.5 316.9 1127.9 314.7 1125.9 310.0C1123.9 305.3 1121.6 301.2 1118.9 297.1C1116.2 293.0 1113.0 288.9 1109.5 285.4C1106.0 281.9 1102.0 278.1 1097.7 275.9C1093.4 273.7 1087.9 272.4 1083.6 272.4Z" fill="#613590" stroke="#7b2bcf" stroke-width="2"/>
<path d="M1087.4 275.8C1085.7 276.3 1080.0 277.1 1077.0 278.8C1074.0 280.5 1071.5 283.0 1069.5 286.0C1067.5 289.0 1066.0 292.4 1065.0 297.0C1064.0 301.6 1063.3 304.9 1063.4 313.5C1063.5 322.1 1064.9 337.1 1065.8 348.9C1066.7 360.7 1067.9 374.2 1068.7 384.2C1069.5 394.2 1069.4 401.8 1070.4 409.0C1071.5 416.2 1072.7 421.5 1075.0 427.5C1077.3 433.5 1080.8 440.3 1084.0 445.0C1087.2 449.7 1092.8 453.8 1094.5 455.5" stroke="#7b2bcf" stroke-width="1.2"/>
<path d="M1075.6 278.6C1074.3 279.8 1070.1 282.8 1068.1 285.8C1066.1 288.8 1064.6 292.2 1063.6 296.8C1062.6 301.4 1061.9 304.7 1062.0 313.3C1062.1 321.9 1063.5 336.9 1064.4 348.7C1065.3 360.5 1066.5 374.0 1067.3 384.0C1068.1 394.0 1068.0 401.6 1069.0 408.8C1070.0 416.0 1071.3 421.3 1073.6 427.3C1075.9 433.3 1079.3 440.1 1082.6 444.8C1085.8 449.5 1091.3 453.6 1093.1 455.3" stroke="#3e2066" stroke-width="0.9" stroke-dasharray="1.3 1.1"/>
<path d="M1090.0 276.4C1091.3 276.9 1095.1 277.6 1098.0 279.5C1100.9 281.4 1104.5 284.7 1107.5 288.0C1110.5 291.3 1113.5 295.5 1116.0 299.5C1118.5 303.5 1120.7 307.6 1122.5 312.0C1124.3 316.4 1125.9 317.9 1127.0 326.0C1128.1 334.1 1128.6 350.9 1129.3 360.6C1130.0 370.3 1130.3 376.8 1131.0 384.2C1131.7 391.6 1133.2 401.5 1133.6 405.0" stroke="#3e2066" stroke-width="0.9" stroke-dasharray="1.3 1.6"/>
<path d="M1086.3 450.5C1088.6 450.4 1094.9 449.1 1100.0 449.8C1105.1 450.5 1114.2 453.7 1117.1 454.5" stroke="#7b2bcf" stroke-width="1.1"/>
<g transform="rotate(-4.0 1092.7 311.7)"><ellipse cx="1092.7" cy="311.7" rx="18.4" ry="29.2" fill="url(#go1)" stroke="#7b2bcf" stroke-width="1.7"/><path d="M1092.7 282.5Q1092.7 311.7 1092.7 340.9M1082.9 287.0Q1092.7 294.4 1102.5 287.0M1079.4 291.5Q1092.7 297.5 1106.0 291.5M1077.2 296.0Q1092.7 300.7 1108.2 296.0M1075.7 300.5Q1092.7 303.8 1109.7 300.5M1074.8 305.0Q1092.7 307.0 1110.6 305.0M1074.4 309.5Q1092.7 310.1 1111.0 309.5M1074.4 313.9Q1092.7 313.3 1111.0 313.9M1074.8 318.4Q1092.7 316.4 1110.6 318.4M1075.7 322.9Q1092.7 319.6 1109.7 322.9M1077.2 327.4Q1092.7 322.7 1108.2 327.4M1079.4 331.9Q1092.7 325.9 1106.0 331.9M1082.9 336.4Q1092.7 329.0 1102.5 336.4" stroke="#7b2bcf" stroke-width="1.15"/></g>
<g transform="rotate(-5.8 1099.6 405.4)"><ellipse cx="1099.6" cy="405.4" rx="15.0" ry="22.8" fill="url(#go2)" stroke="#7b2bcf" stroke-width="1.7"/><path d="M1099.6 382.6Q1095.6 405.4 1099.6 428.2M1090.6 387.2Q1097.6 392.6 1108.6 387.2M1087.6 391.7Q1097.6 395.8 1111.6 391.7M1085.9 396.3Q1097.6 399.0 1113.3 396.3M1084.9 400.8Q1097.6 402.2 1114.3 400.8M1084.6 405.4Q1097.6 405.4 1114.6 405.4M1084.9 410.0Q1097.6 408.6 1114.3 410.0M1085.9 414.5Q1097.6 411.8 1113.3 414.5M1087.6 419.1Q1097.6 415.0 1111.6 419.1M1090.6 423.6Q1097.6 418.2 1108.6 423.6" stroke="#7b2bcf" stroke-width="1.15"/></g>
<path d="M1088 275.8L1088.9 282.6" stroke="#7b2bcf" stroke-width="1.2"/>
<path d="M1093.6 340.6L1095.3 383" stroke="#7b2bcf" stroke-width="1.2"/>
<rect x="1070.6" y="349.5" width="21.4" height="20.8" rx="8" fill="#7b2bcf" transform="rotate(3 1081 360)"/>
<rect x="1098.6" y="352.6" width="29.6" height="21.4" rx="9.5" fill="#7b2bcf" transform="rotate(4 1113 363)"/>
<path d="M1074.0 355.0l-0.5 3.2M1076.9 355.1l-0.5 3.2M1079.8 355.3l-0.5 3.2M1082.7 355.4l-0.5 3.2M1085.6 355.6l-0.5 3.2M1088.5 355.8l-0.5 3.2M1102.5 358.0l-0.5 3.2M1105.4 358.2l-0.5 3.2M1108.3 358.4l-0.5 3.2M1111.2 358.6l-0.5 3.2M1114.1 358.8l-0.5 3.2M1117.0 359.0l-0.5 3.2M1119.9 359.2l-0.5 3.2M1122.8 359.4l-0.5 3.2M1125.7 359.6l-0.5 3.2M1074.0 360.2l-0.5 3.2M1076.9 360.3l-0.5 3.2M1079.8 360.5l-0.5 3.2M1082.7 360.6l-0.5 3.2M1085.6 360.8l-0.5 3.2M1088.5 360.9l-0.5 3.2M1102.5 363.2l-0.5 3.2M1105.4 363.4l-0.5 3.2M1108.3 363.6l-0.5 3.2M1111.2 363.8l-0.5 3.2M1114.1 364.0l-0.5 3.2M1117.0 364.2l-0.5 3.2M1119.9 364.4l-0.5 3.2M1122.8 364.6l-0.5 3.2M1125.7 364.8l-0.5 3.2M1074.0 365.4l-0.5 3.2M1076.9 365.5l-0.5 3.2M1079.8 365.7l-0.5 3.2M1082.7 365.8l-0.5 3.2M1085.6 366.0l-0.5 3.2M1088.5 366.1l-0.5 3.2M1102.5 368.4l-0.5 3.2M1105.4 368.6l-0.5 3.2M1108.3 368.8l-0.5 3.2M1111.2 369.0l-0.5 3.2M1114.1 369.2l-0.5 3.2M1117.0 369.4l-0.5 3.2M1119.9 369.6l-0.5 3.2M1122.8 369.8l-0.5 3.2M1125.7 370.0l-0.5 3.2" stroke="#5a2c94" stroke-width="1.1"/>
<path d="M1037.1 246.5C1037.2 244.7 1037.1 239.2 1037.7 235.9C1038.3 232.6 1039.4 229.4 1040.6 226.5C1041.8 223.6 1042.5 221.4 1044.7 218.3C1047.0 215.2 1050.4 210.9 1054.1 207.7C1057.8 204.4 1062.0 201.6 1067.1 198.8C1072.2 196.1 1077.8 193.3 1084.7 191.2C1091.6 189.0 1099.5 187.0 1108.3 185.9C1117.1 184.8 1115.8 184.7 1137.7 184.4C1159.7 184.1 1214.8 183.9 1240.0 183.9C1265.2 183.9 1272.9 184.2 1288.9 184.4C1304.9 184.6 1324.1 184.8 1335.9 185.3C1347.7 185.9 1351.7 186.4 1359.5 187.7C1367.3 189.0 1376.1 191.2 1383.0 193.0C1389.9 194.8 1395.6 196.6 1400.7 198.8C1405.8 201.1 1410.1 203.7 1413.6 206.5C1417.1 209.3 1419.7 212.8 1421.9 215.9C1424.1 219.0 1425.4 222.0 1426.6 225.3C1427.8 228.6 1428.4 232.9 1428.9 235.9C1429.4 238.9 1429.4 242.3 1429.5 243.6M1037.1 246.5C1044.2 246.9 1063.2 248.2 1080.0 248.9C1096.8 249.6 1117.7 250.3 1137.7 250.8C1157.7 251.3 1183.0 251.6 1200.0 251.8C1217.0 252.0 1221.3 252.2 1240.0 251.8C1258.7 251.4 1289.1 250.1 1312.4 249.2C1335.7 248.3 1360.5 247.1 1380.0 246.2C1399.5 245.3 1421.2 244.0 1429.5 243.6M1037.7 256.5C1054.2 257.1 1105.0 259.5 1137.0 260.3C1169.0 261.1 1200.8 261.5 1230.0 261.3C1259.2 261.1 1287.4 259.9 1312.4 258.9C1337.4 257.9 1360.5 256.6 1380.0 255.5C1399.5 254.4 1421.2 252.9 1429.5 252.4M1038.2 264.2C1048.9 264.9 1082.1 267.4 1102.4 268.3C1122.7 269.2 1138.7 269.5 1160.0 269.8C1181.3 270.1 1204.6 270.5 1230.0 270.1C1255.4 269.8 1284.9 268.9 1312.4 267.7C1339.9 266.5 1375.4 264.4 1394.8 263.0C1414.2 261.6 1423.2 260.1 1428.9 259.5M1429.5 243.6L1429.5 259.5M1037.1 246.5L1038.2 264.2M1067.1 198.8C1080.9 198.7 1121.2 198.5 1150.0 198.4C1178.8 198.3 1210.0 198.3 1240.0 198.3C1270.0 198.3 1303.0 198.4 1330.0 198.6C1357.0 198.8 1389.9 199.3 1401.9 199.4M1044.7 218.9C1060.6 219.1 1107.5 219.9 1140.0 220.2C1172.5 220.5 1208.3 220.9 1240.0 220.8C1271.7 220.7 1299.7 220.3 1330.0 219.8C1360.3 219.3 1406.6 218.0 1421.9 217.7M1134.8 184.7C1131.8 185.8 1122.4 188.3 1117.0 191.0C1111.6 193.7 1106.6 197.6 1102.4 200.6C1098.2 203.6 1094.8 206.2 1092.0 209.0C1089.2 211.8 1087.7 214.1 1085.9 217.1C1084.2 220.1 1082.5 223.9 1081.5 227.0C1080.5 230.1 1080.4 231.7 1080.0 235.9C1079.6 240.1 1078.7 246.9 1078.9 252.4C1079.1 257.9 1080.4 265.6 1081.2 268.9C1082.0 272.2 1083.2 271.8 1083.6 272.4M1203.6 184.1C1202.2 185.2 1197.3 188.6 1195.0 191.0C1192.7 193.4 1191.1 195.5 1189.5 198.3C1187.9 201.1 1186.5 204.9 1185.5 208.0C1184.5 211.1 1184.4 211.7 1183.6 217.1C1182.8 222.5 1181.3 234.7 1180.7 240.6C1180.1 246.5 1180.0 247.5 1180.1 252.4C1180.1 257.3 1180.6 262.9 1181.0 270.0C1181.4 277.1 1181.7 280.8 1182.4 295.0C1183.1 309.2 1184.2 335.0 1185.0 355.0C1185.8 375.0 1186.3 395.1 1187.0 415.0C1187.7 434.9 1188.3 458.8 1189.1 474.7C1189.8 490.6 1190.3 499.5 1191.5 510.3C1192.7 521.1 1194.2 532.2 1196.4 539.5C1198.6 546.8 1203.2 551.6 1204.5 554.0M1284.1 184.4C1285.6 185.4 1290.2 188.2 1293.0 190.5C1295.8 192.8 1298.4 195.4 1300.6 198.3C1302.8 201.2 1304.4 204.9 1306.0 208.0C1307.6 211.1 1308.7 211.7 1310.0 217.1C1311.3 222.5 1313.0 234.7 1313.6 240.6C1314.2 246.5 1313.9 247.8 1313.8 252.4C1313.7 257.0 1313.3 261.7 1313.2 268.0C1313.1 274.3 1313.4 264.7 1312.9 290.0C1312.4 315.3 1310.9 389.2 1310.3 420.0C1309.7 450.8 1310.0 460.4 1309.3 474.7C1308.6 488.9 1307.4 495.6 1306.1 505.5C1304.8 515.4 1303.1 526.8 1301.2 533.8C1299.3 540.8 1295.8 545.2 1294.7 547.5M1359.5 187.7C1362.1 188.4 1370.1 190.4 1375.0 192.0C1379.9 193.6 1384.9 194.9 1388.9 197.1C1392.9 199.3 1396.0 202.2 1399.0 205.0C1402.0 207.8 1404.5 210.8 1406.6 213.6C1408.7 216.4 1410.1 219.1 1411.5 222.0C1412.9 224.9 1414.0 227.1 1414.8 231.2C1415.6 235.3 1416.2 241.6 1416.6 246.5C1417.0 251.4 1417.7 257.4 1417.2 260.6C1416.7 263.9 1414.4 261.1 1413.6 266.0C1412.8 270.9 1413.3 274.9 1412.6 290.0C1411.9 305.1 1410.4 335.2 1409.2 356.9C1408.0 378.6 1406.1 404.4 1405.2 420.0C1404.3 435.6 1405.4 440.6 1404.0 450.5C1402.6 460.4 1399.8 470.4 1396.7 479.6C1393.6 488.8 1389.1 499.0 1385.3 505.5C1381.5 512.0 1375.9 516.2 1374.0 518.4M1099.3 427.8C1099.1 430.7 1098.3 439.1 1098.0 445.0C1097.7 450.9 1097.2 456.3 1097.7 463.4C1098.2 470.5 1099.3 479.3 1100.9 487.7C1102.5 496.1 1104.7 506.5 1107.4 513.6C1110.1 520.8 1113.9 526.0 1117.1 530.6C1120.3 535.2 1125.2 539.3 1126.8 541.0M1050.6 371.2L1063.0 376.0M1134.8 385.4C1143.5 386.3 1171.1 389.3 1187.0 391.0C1202.9 392.7 1216.2 393.9 1230.0 395.7C1243.8 397.5 1256.6 400.0 1270.0 402.0C1283.4 404.0 1298.6 406.9 1310.3 407.7C1322.0 408.5 1331.1 407.7 1340.0 407.0C1348.9 406.3 1356.3 405.2 1363.8 403.7C1371.3 402.2 1378.3 400.2 1385.0 398.0C1391.7 395.8 1399.2 392.8 1403.9 390.3C1408.6 387.8 1410.8 385.2 1413.0 383.0C1415.2 380.8 1416.0 380.1 1417.3 376.9C1418.6 373.7 1420.0 365.8 1420.6 363.6M1058.8 454.5C1061.5 455.8 1068.5 459.4 1075.0 462.0C1081.5 464.6 1085.3 467.2 1097.7 469.9C1110.1 472.6 1131.3 476.3 1149.4 478.0C1167.5 479.7 1191.0 479.8 1206.1 479.9C1221.2 480.0 1222.5 480.3 1240.0 478.8C1257.5 477.3 1291.0 474.1 1310.9 470.7C1330.8 467.3 1343.8 462.9 1359.5 458.5C1375.2 454.1 1395.4 447.4 1404.8 444.0C1414.2 440.6 1414.2 439.2 1416.1 438.3M1064.5 481.2C1067.1 482.4 1073.9 486.1 1080.0 488.5C1086.1 490.9 1089.3 493.1 1100.9 495.8C1112.5 498.5 1133.2 502.6 1149.4 504.7C1165.6 506.8 1182.9 508.0 1198.0 508.7C1213.1 509.4 1222.0 509.5 1240.0 509.0C1258.0 508.5 1286.2 508.2 1306.1 505.5C1326.0 502.8 1344.4 496.8 1359.5 492.5C1374.6 488.2 1388.6 483.0 1396.7 479.6C1404.8 476.2 1406.1 473.5 1408.0 472.3M1083.1 513.6C1085.6 515.1 1092.3 519.7 1098.0 522.5C1103.7 525.3 1108.5 528.1 1117.1 530.6C1125.7 533.1 1135.9 535.9 1149.4 537.8C1162.9 539.7 1182.9 541.3 1198.0 541.9C1213.1 542.5 1222.8 542.8 1240.0 541.4C1257.2 540.0 1284.0 537.1 1301.2 533.8C1318.4 530.5 1330.9 525.6 1343.3 521.7C1355.7 517.8 1368.6 513.0 1375.6 510.3C1382.6 507.6 1383.7 506.3 1385.3 505.5" stroke="#7b2bcf" stroke-width="1.5" stroke-linejoin="round"/>
<path d="M830.9 557.2V609L791.3 604.1M830.9 609L797.4 615.4" stroke="#686868" stroke-width="1.2"/>
<g font-family="Liberation Sans,sans-serif" font-size="22" fill="#5c5c5c"><text x="834.8" y="558.4">z</text><text x="796.2" y="604.9">x</text><text x="802.6" y="613.6">y</text></g>
</svg>
<div style="position:absolute;left:0;top:0;width:176px;height:34px;background:#8ca7c6;border-bottom-right-radius:5px"></div>
<div class="vtitle" style="left:13px;top:1px;height:34px;line-height:33px;font-size:23.3px;color:#000">Perspective</div>
<div style="position:absolute;left:156px;top:2px;width:1px;height:31px;background:#000"></div>
<svg width="20" height="12" style="left:159px;top:12px"><path d="M0.9 1.2H12.1L6.5 8.3Z" fill="#000"/></svg></div>
<div class="vp" id="vpBR" style="left:769px;top:679px;width:1100px;height:434px"><svg width="1869" height="1113" viewBox="0 0 1869 1113" style="left:-769px;top:-679px" fill="none" stroke="#7b2bcf">
<path stroke-width="1.3" d="M890.5 679.0C888.7 713.3 882.4 837.5 879.7 885.0C877.1 932.5 876.7 926.0 874.6 964.0C872.5 1002.0 868.6 1088.2 867.4 1113.0M905.3 775.0L938.1 964.0M917.0 679.0C916.2 694.2 913.6 747.3 912.5 770.0C911.4 792.7 910.8 807.5 910.5 815.0M944.9 679.0L980.1 964.0M988.3 679.0L1015.0 964.0M1023.9 679.0L1044.3 964.0M1051.6 679.0L1069.7 964.0M1076.3 679.0L1091.4 964.0M1098.0 679.0L1110.2 964.0M1116.8 679.0L1125.6 964.0M1131.6 679.0L1137.9 964.0M1144.0 679.0L1146.1 964.0M1148.4 679.0L1148.2 964.0M1146.0 679.0L1141.0 964.0M887.9 964.0C889.9 957.5 896.1 936.5 900.0 925.0C903.9 913.5 905.5 909.5 911.3 895.0C917.1 880.5 927.3 855.6 935.0 838.0C942.7 820.4 950.5 803.3 957.7 789.6C964.9 775.9 971.9 765.2 978.0 756.0C984.1 746.8 989.3 739.9 994.3 734.3C999.3 728.7 1003.5 725.2 1008.1 722.4C1012.7 719.6 1017.3 718.5 1021.9 717.5C1026.5 716.5 1028.9 716.2 1035.8 716.1C1042.7 716.0 1051.6 716.9 1063.4 717.1C1075.2 717.3 1096.0 717.2 1106.9 717.1C1117.8 717.0 1124.1 716.1 1128.7 716.5C1133.3 716.9 1133.0 717.9 1134.6 719.5C1136.2 721.1 1137.4 722.1 1138.5 726.4C1139.6 730.6 1140.6 741.9 1141.0 745.0M887.9 964.0L929.9 1113.0M938.1 964.0L898.2 1113.0M980.1 964.0L946.3 1113.0M1015.0 964.0L986.3 1113.0M1044.3 964.0L1018.0 1113.0M1069.7 964.0L1046.7 1113.0M1091.4 964.0L1068.2 1113.0M1110.2 964.0L1088.7 1113.0M1125.6 964.0L1106.1 1113.0M1137.9 964.0L1122.5 1113.0M1146.1 964.0L1126.6 1113.0M1148.2 964.0L1129.7 1113.0M1141.0 964.0L1123.5 1113.0M770.5 713.0L768.8 748.0"/>
<path stroke-width="2.5" d="M918.2 679.0C916.0 695.8 909.0 745.7 905.0 780.0C901.0 814.3 897.0 854.3 894.0 885.0C891.0 915.7 888.4 926.0 886.9 964.0C885.4 1002.0 885.1 1088.2 884.8 1113.0M922.1 679.0C919.8 695.8 912.4 745.7 908.0 780.0C903.6 814.3 898.9 854.3 895.5 885.0C892.1 915.7 889.2 950.8 887.9 964.0M932.0 679.0C929.5 697.5 921.3 755.7 917.0 790.0C912.7 824.3 909.2 856.0 906.4 885.0C903.6 914.0 901.6 926.0 900.2 964.0C898.8 1002.0 898.5 1088.2 898.2 1113.0M994.3 679.0C994.8 713.3 996.5 837.5 997.1 885.0C997.7 932.5 997.6 926.0 998.0 964.0C998.4 1002.0 999.3 1088.2 999.6 1113.0M1021.9 679.0C1022.3 713.3 1023.7 837.5 1024.2 885.0C1024.8 932.5 1024.9 926.0 1025.2 964.0C1025.5 1002.0 1025.7 1088.2 1025.8 1113.0M1039.7 679.0C1038.0 713.3 1031.9 837.5 1029.3 885.0C1026.7 932.5 1026.2 926.0 1024.2 964.0C1022.2 1002.0 1018.2 1088.2 1017.0 1113.0M1067.4 679.0C1065.7 713.3 1059.4 837.5 1057.0 885.0C1054.6 932.5 1055.0 926.0 1052.9 964.0C1050.9 1002.0 1046.1 1088.2 1044.7 1113.0M1140.5 679.0C1139.4 713.3 1135.8 837.5 1133.8 885.0C1131.8 932.5 1130.9 926.0 1128.7 964.0C1126.5 1002.0 1121.9 1088.2 1120.5 1113.0M1142.5 679.0C1141.9 713.3 1140.0 837.5 1138.9 885.0C1137.8 932.5 1138.3 926.0 1135.9 964.0C1133.5 1002.0 1126.5 1088.2 1124.6 1113.0M887.9 964.0L1148.2 964.0"/>
</svg>
<div style="position:absolute;left:0;top:0;width:104px;height:34px;background:#cdd1d9;border-bottom-right-radius:6px"></div>
<div class="vtitle" style="left:10.8px;top:1px;height:34px;line-height:33px;font-size:23.5px;color:#4b4b4f">Right</div>
<div style="position:absolute;left:84px;top:3px;width:1px;height:29px;background:#55575c"></div>
<svg width="20" height="12" style="left:87px;top:12px"><path d="M1 1.3H11.6L6.3 8.2Z" fill="#55575c"/></svg></div>
</body></html>
